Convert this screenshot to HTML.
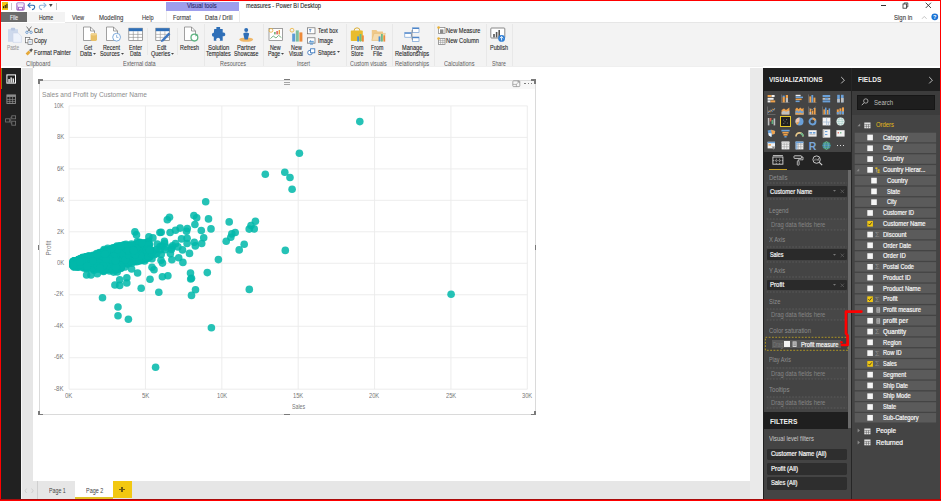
<!DOCTYPE html>
<html><head><meta charset="utf-8"><title>measures - Power BI Desktop</title>
<style>
html,body{margin:0;padding:0;}
body{width:941px;height:501px;overflow:hidden;background:#fff;font-family:"Liberation Sans",sans-serif;position:relative;}
#root{position:absolute;left:0;top:0;width:941px;height:501px;overflow:hidden;background:#fff;}
.r{position:absolute;display:block;}
.t{position:absolute;display:block;white-space:nowrap;transform-origin:0 50%;}
</style></head><body><div id="root">
<div class="r" style="left:0.00px;top:22.50px;width:941.00px;height:43.50px;background:#f3f3f3;"></div>
<div class="r" style="left:0.00px;top:66.00px;width:941.00px;height:2.00px;background:#ffffff;"></div>
<div class="r" style="left:21.00px;top:66.00px;width:742.00px;height:1.20px;background:#efefef;"></div>
<div class="r" style="left:0.00px;top:68.00px;width:941.00px;height:433.00px;background:#e9e9e9;"></div>
<div class="r" style="left:1.00px;top:68.00px;width:19.50px;height:431.00px;background:#212121;"></div>
<div class="r" style="left:20.50px;top:68.00px;width:1.00px;height:431.00px;background:#f6f6f6;"></div>
<div class="r" style="left:21.50px;top:68.00px;width:11.00px;height:413.00px;background:#e6e6e6;"></div>
<div class="r" style="left:32.50px;top:68.00px;width:717.50px;height:412.50px;background:#ffffff;"></div>
<div class="r" style="left:750.00px;top:68.00px;width:13.00px;height:431.00px;background:#eaeaea;"></div>
<div class="r" style="left:21.50px;top:481.00px;width:728.50px;height:18.00px;background:#e6e6e6;"></div>
<div class="r" style="left:763.00px;top:68.00px;width:177.00px;height:431.00px;background:#444444;"></div>
<div class="r" style="left:763.00px;top:68.00px;width:177.00px;height:22.50px;background:#1f1f1f;"></div>
<div class="r" style="left:763.00px;top:68.00px;width:1.00px;height:431.00px;background:#1f1f1f;"></div>
<div class="r" style="left:851.00px;top:68.00px;width:1.00px;height:431.00px;background:#262626;"></div>
<div class="r" style="left:1.50px;top:2.00px;width:6.40px;height:7.60px;background:#f2c811;"></div>
<svg class="r" style="left:1.50px;top:2.00px;" width="7" height="8" viewBox="0 0 7 8"><rect x="1" y="4.2" width="1.1" height="2" fill="#222"/><rect x="2.7" y="3" width="1.1" height="3.2" fill="#222"/><rect x="4.4" y="1.8" width="1.1" height="4.4" fill="#222"/></svg>
<div class="r" style="left:11.20px;top:2.50px;width:0.70px;height:7.00px;background:#c8c8c8;"></div>
<svg class="r" style="left:16.00px;top:1.50px;" width="9" height="9" viewBox="0 0 9 9"><rect x="1" y="1" width="7" height="7" rx="0.8" fill="#fff" stroke="#8e4bb8" stroke-width="1.1"/><rect x="2.6" y="5.2" width="3.8" height="2.6" fill="#fff" stroke="#8e4bb8" stroke-width="0.8"/><rect x="1.3" y="1.2" width="6.4" height="2.2" fill="#e9dcf3"/></svg>
<svg class="r" style="left:27.00px;top:1.50px;" width="9" height="9" viewBox="0 0 9 9"><path d="M1.2 3.2 L6 3.2 Q8 3.4 7.6 5.6 Q7.2 7.4 5 7.6" fill="none" stroke="#2e6db5" stroke-width="1.1"/><path d="M3.4 0.8 L1 3.2 L3.4 5.6" fill="none" stroke="#2e6db5" stroke-width="1.1"/></svg>
<svg class="r" style="left:37.50px;top:1.50px;" width="9" height="9" viewBox="0 0 9 9"><path d="M7.8 3.2 L3 3.2 Q1 3.4 1.4 5.6 Q1.8 7.4 4 7.6" fill="none" stroke="#8fb3dc" stroke-width="1.1"/><path d="M5.6 0.8 L8 3.2 L5.6 5.6" fill="none" stroke="#8fb3dc" stroke-width="1.1"/></svg>
<svg class="r" style="left:48.80px;top:4.40px;" width="4" height="4" viewBox="0 0 4 4"><path d="M0 0 L3.6 0 L1.8 3 Z" fill="#444"/></svg>
<div class="r" style="left:56.20px;top:2.50px;width:0.70px;height:7.00px;background:#c8c8c8;"></div>
<div class="r" style="left:166.20px;top:1.50px;width:72.60px;height:9.80px;background:#9e9eec;"></div>
<span class="t" style="left:187.20px;top:3.05px;font-size:6.3px;line-height:6.3px;color:#2a2a6a;-webkit-text-stroke:0.1px #2a2a6a;transform:scaleX(0.9283);">Visual tools</span>
<span class="t" style="left:245.50px;top:3.10px;font-size:6.8px;line-height:6.8px;color:#222222;-webkit-text-stroke:0.1px #222222;transform:scaleX(0.8304);">measures - Power BI Desktop</span>
<div class="r" style="left:880.70px;top:4.80px;width:5.80px;height:0.90px;background:#333;"></div>
<svg class="r" style="left:902.00px;top:1.80px;" width="7" height="7" viewBox="0 0 7 7"><rect x="1" y="2" width="3.6" height="4.2" fill="#fff" stroke="#333" stroke-width="0.8"/><path d="M2.2 2 V0.9 H5.8 V5 H4.6" fill="none" stroke="#333" stroke-width="0.8"/></svg>
<svg class="r" style="left:924.50px;top:2.00px;" width="7" height="7" viewBox="0 0 7 7"><path d="M0.7 0.7 L6 6 M6 0.7 L0.7 6" stroke="#333" stroke-width="0.9" fill="none"/></svg>
<div class="r" style="left:1.20px;top:11.70px;width:26.00px;height:10.60px;background:#6b6b6b;"></div>
<span class="t" style="left:9.90px;top:14.75px;font-size:6.3px;line-height:6.3px;color:#f4f4f4;-webkit-text-stroke:0.1px #f4f4f4;transform:scaleX(0.7881);">File</span>
<div class="r" style="left:27.40px;top:11.70px;width:37.40px;height:10.80px;background:#f3f3f3;"></div>
<span class="t" style="left:38.90px;top:14.75px;font-size:6.3px;line-height:6.3px;color:#2f2f2f;-webkit-text-stroke:0.1px #2f2f2f;transform:scaleX(0.8510);">Home</span>
<span class="t" style="left:72.00px;top:14.75px;font-size:6.3px;line-height:6.3px;color:#3b3b3b;-webkit-text-stroke:0.1px #3b3b3b;transform:scaleX(0.9010);">View</span>
<span class="t" style="left:98.70px;top:14.75px;font-size:6.3px;line-height:6.3px;color:#3b3b3b;-webkit-text-stroke:0.1px #3b3b3b;transform:scaleX(0.9505);">Modeling</span>
<span class="t" style="left:141.70px;top:14.75px;font-size:6.3px;line-height:6.3px;color:#3b3b3b;-webkit-text-stroke:0.1px #3b3b3b;transform:scaleX(0.8876);">Help</span>
<span class="t" style="left:173.00px;top:14.75px;font-size:6.3px;line-height:6.3px;color:#3b3b3b;-webkit-text-stroke:0.1px #3b3b3b;transform:scaleX(0.8872);">Format</span>
<span class="t" style="left:205.00px;top:14.75px;font-size:6.3px;line-height:6.3px;color:#3b3b3b;-webkit-text-stroke:0.1px #3b3b3b;transform:scaleX(0.9352);">Data / Drill</span>
<div class="r" style="left:166.20px;top:11.30px;width:0.60px;height:11.00px;background:#ececec;"></div>
<div class="r" style="left:238.60px;top:11.30px;width:0.60px;height:11.00px;background:#ececec;"></div>
<span class="t" style="left:894.00px;top:14.75px;font-size:6.3px;line-height:6.3px;color:#3b3b3b;-webkit-text-stroke:0.1px #3b3b3b;transform:scaleX(0.9500);">Sign in</span>
<svg class="r" style="left:920.50px;top:14.50px;" width="7" height="5" viewBox="0 0 7 5"><path d="M1 3.8 L3.3 1.4 L5.6 3.8" fill="none" stroke="#b8b8b8" stroke-width="0.8"/></svg>
<svg class="r" style="left:930.80px;top:13.40px;" width="8" height="8" viewBox="0 0 8 8"><circle cx="3.8" cy="3.8" r="3.4" fill="#1a73d6"/><text x="3.8" y="6" font-size="5.6" font-weight="bold" fill="#fff" text-anchor="middle" font-family="Liberation Sans">?</text></svg>
<div class="r" style="left:64.80px;top:22.40px;width:876.00px;height:0.60px;background:#e6e6e6;"></div>
<div class="r" style="left:75.70px;top:24.00px;width:0.60px;height:42.00px;background:#e8e8e8;"></div>
<div class="r" style="left:203.60px;top:24.00px;width:0.60px;height:42.00px;background:#e8e8e8;"></div>
<div class="r" style="left:262.50px;top:24.00px;width:0.60px;height:42.00px;background:#e8e8e8;"></div>
<div class="r" style="left:345.50px;top:24.00px;width:0.60px;height:42.00px;background:#e8e8e8;"></div>
<div class="r" style="left:391.70px;top:24.00px;width:0.60px;height:42.00px;background:#e8e8e8;"></div>
<div class="r" style="left:433.70px;top:24.00px;width:0.60px;height:42.00px;background:#e8e8e8;"></div>
<div class="r" style="left:486.20px;top:24.00px;width:0.60px;height:42.00px;background:#e8e8e8;"></div>
<div class="r" style="left:512.00px;top:24.00px;width:0.60px;height:42.00px;background:#e8e8e8;"></div>
<div class="r" style="left:147.40px;top:27.50px;width:0.60px;height:27.50px;background:#e8e8e8;"></div>
<div class="r" style="left:176.60px;top:27.50px;width:0.60px;height:27.50px;background:#e8e8e8;"></div>
<svg class="r" style="left:6.50px;top:26.50px;" width="16" height="16" viewBox="0 0 16 16"><rect x="1" y="2.2" width="10" height="12.6" fill="#cdd9ec"/><rect x="3.8" y="0.8" width="4.4" height="2.6" rx="1" fill="#b9c8e2"/><path d="M6 6 H11.2 L14.4 9.2 V15.4 H6 Z" fill="#eef3fb" stroke="#c9d5ea" stroke-width="0.6"/></svg>
<span class="t" style="left:6.70px;top:44.60px;font-size:6.4px;line-height:6.4px;color:#9c9c9c;-webkit-text-stroke:0.1px #9c9c9c;transform:scaleX(0.7333);">Paste</span>
<svg class="r" style="left:24.80px;top:26.40px;" width="8" height="8" viewBox="0 0 8 8"><path d="M1.6 0.6 L5.4 5.6 M6.4 0.6 L2.6 5.6" stroke="#5a5a5a" stroke-width="0.8" fill="none"/><circle cx="1.9" cy="6.3" r="1.2" fill="none" stroke="#5b8fcb" stroke-width="0.8"/><circle cx="6.1" cy="6.3" r="1.2" fill="none" stroke="#5b8fcb" stroke-width="0.8"/></svg>
<span class="t" style="left:34.20px;top:27.80px;font-size:6.4px;line-height:6.4px;color:#262626;-webkit-text-stroke:0.1px #262626;transform:scaleX(0.8836);">Cut</span>
<svg class="r" style="left:24.80px;top:36.80px;" width="8" height="8" viewBox="0 0 8 8"><rect x="0.6" y="0.6" width="4.2" height="5.2" fill="#fff" stroke="#6a6a6a" stroke-width="0.7"/><rect x="3" y="2.4" width="4.2" height="5.2" fill="#fff" stroke="#6a6a6a" stroke-width="0.7"/><path d="M4 4.3 H6.2 M4 5.8 H6.2" stroke="#6d9bd1" stroke-width="0.5"/></svg>
<span class="t" style="left:34.20px;top:38.30px;font-size:6.4px;line-height:6.4px;color:#262626;-webkit-text-stroke:0.1px #262626;transform:scaleX(0.8568);">Copy</span>
<svg class="r" style="left:25.00px;top:48.00px;" width="9" height="8" viewBox="0 0 9 8"><path d="M0.6 5.4 L3.6 2.4 L5.6 4.4 L2.6 7.4 Z" fill="#e5a838"/><path d="M4 2 L6.6 0.4 L7.8 1.6 L6.2 4.2 Z" fill="#555"/></svg>
<span class="t" style="left:34.20px;top:49.60px;font-size:6.4px;line-height:6.4px;color:#262626;-webkit-text-stroke:0.1px #262626;transform:scaleX(0.8742);">Format Painter</span>
<span class="t" style="left:25.50px;top:60.75px;font-size:6.3px;line-height:6.3px;color:#5e5e5e;transform:scaleX(0.9086);">Clipboard</span>
<svg class="r" style="left:82.00px;top:0.00px;" width="18" height="44" viewBox="0 0 18 44"><path d="M1.5 27.0 H8.5 L12.5 31.0 V40.5 H1.5 Z" fill="#fff" stroke="#7a7a7a" stroke-width="0.7"/><path d="M8.5 27.0 V31.0 H12.5" fill="none" stroke="#7a7a7a" stroke-width="0.7"/><rect x="8.6" y="33.6" width="6.4" height="7.4" rx="1.4" fill="#e8c067"/><ellipse cx="11.8" cy="34.2" rx="3.2" ry="1.2" fill="#f0d28f"/></svg>
<span class="t" style="left:84.20px;top:44.60px;font-size:6.4px;line-height:6.4px;color:#262626;-webkit-text-stroke:0.1px #262626;transform:scaleX(0.7950);">Get</span>
<span class="t" style="left:80.40px;top:50.80px;font-size:6.4px;line-height:6.4px;color:#262626;-webkit-text-stroke:0.1px #262626;transform:scaleX(0.8803);">Data</span>
<svg class="r" style="left:93.30px;top:52.60px;" width="4" height="3" viewBox="0 0 4 3"><path d="M0 0 L3 0 L1.5 1.8 Z" fill="#444"/></svg>
<svg class="r" style="left:104.50px;top:0.00px;" width="18" height="44" viewBox="0 0 18 44"><path d="M1.5 27.0 H8.5 L12.5 31.0 V40.5 H1.5 Z" fill="#fff" stroke="#7a7a7a" stroke-width="0.7"/><path d="M8.5 27.0 V31.0 H12.5" fill="none" stroke="#7a7a7a" stroke-width="0.7"/><circle cx="11.6" cy="37.2" r="3.9" fill="#fff" stroke="#6fa0d6" stroke-width="0.9"/><path d="M11.6 34.9 V37.4 H13.4" fill="none" stroke="#6fa0d6" stroke-width="0.7"/></svg>
<span class="t" style="left:103.00px;top:44.60px;font-size:6.4px;line-height:6.4px;color:#262626;-webkit-text-stroke:0.1px #262626;transform:scaleX(0.8384);">Recent</span>
<span class="t" style="left:100.00px;top:50.80px;font-size:6.4px;line-height:6.4px;color:#262626;-webkit-text-stroke:0.1px #262626;transform:scaleX(0.8434);">Sources</span>
<svg class="r" style="left:120.70px;top:52.60px;" width="4" height="3" viewBox="0 0 4 3"><path d="M0 0 L3 0 L1.5 1.8 Z" fill="#444"/></svg>
<svg class="r" style="left:127.50px;top:26.50px;" width="16" height="16" viewBox="0 0 16 16"><rect x="0.8" y="1.2" width="13.6" height="12.4" fill="#fff" stroke="#7a7a7a" stroke-width="0.7"/><rect x="0.8" y="1.2" width="13.6" height="3" fill="#2f6fb7"/><path d="M0.8 7.4 H14.4 M0.8 10.4 H14.4 M5.3 4.2 V13.6 M9.9 4.2 V13.6" stroke="#8a8a8a" stroke-width="0.6"/></svg>
<span class="t" style="left:128.60px;top:44.60px;font-size:6.4px;line-height:6.4px;color:#262626;-webkit-text-stroke:0.1px #262626;transform:scaleX(0.8499);">Enter</span>
<span class="t" style="left:129.60px;top:50.80px;font-size:6.4px;line-height:6.4px;color:#262626;-webkit-text-stroke:0.1px #262626;transform:scaleX(0.7989);">Data</span>
<svg class="r" style="left:154.50px;top:26.50px;" width="17" height="16" viewBox="0 0 17 16"><rect x="0.8" y="1.2" width="13.6" height="12.4" fill="#fff" stroke="#7a7a7a" stroke-width="0.7"/><rect x="0.8" y="1.2" width="13.6" height="3" fill="#2f6fb7"/><path d="M0.8 7.4 H14.4 M0.8 10.4 H14.4 M5.3 4.2 V13.6 M9.9 4.2 V13.6" stroke="#9a9a9a" stroke-width="0.6"/><path d="M6.4 13 L13.6 5.4 L15.4 7.2 L8.2 14.4 L5.8 15 Z" fill="#3e78c2"/></svg>
<span class="t" style="left:157.00px;top:44.60px;font-size:6.4px;line-height:6.4px;color:#262626;-webkit-text-stroke:0.1px #262626;transform:scaleX(0.8524);">Edit</span>
<span class="t" style="left:150.60px;top:50.80px;font-size:6.4px;line-height:6.4px;color:#262626;-webkit-text-stroke:0.1px #262626;transform:scaleX(0.8568);">Queries</span>
<svg class="r" style="left:170.60px;top:52.60px;" width="4" height="3" viewBox="0 0 4 3"><path d="M0 0 L3 0 L1.5 1.8 Z" fill="#444"/></svg>
<svg class="r" style="left:182.50px;top:0.00px;" width="18" height="44" viewBox="0 0 18 44"><path d="M1.5 27.0 H8.5 L12.5 31.0 V40.5 H1.5 Z" fill="#fff" stroke="#7a7a7a" stroke-width="0.7"/><path d="M8.5 27.0 V31.0 H12.5" fill="none" stroke="#7a7a7a" stroke-width="0.7"/><circle cx="11.4" cy="37.6" r="3.4" fill="#fff" stroke="#5fb382" stroke-width="1.3"/><path d="M12.6 33.4 L15.2 35 L12.4 36.4 Z" fill="#5fb382"/></svg>
<span class="t" style="left:180.00px;top:44.60px;font-size:6.4px;line-height:6.4px;color:#262626;-webkit-text-stroke:0.1px #262626;transform:scaleX(0.8479);">Refresh</span>
<span class="t" style="left:123.00px;top:60.75px;font-size:6.3px;line-height:6.3px;color:#5e5e5e;transform:scaleX(0.8782);">External data</span>
<svg class="r" style="left:211.00px;top:26.50px;" width="16" height="16" viewBox="0 0 16 16"><path transform="translate(-1.3,-0.6) scale(1.14)" d="M4 2.2 H6 A1.7 1.7 0 1 1 9 2.2 H11.4 V5.4 A1.7 1.7 0 1 1 11.4 8.6 V12.6 H8.8 A1.7 1.7 0 1 0 6 12.6 H3.6 V9 A1.7 1.7 0 1 1 3.6 5.6 Z" fill="#2f6fb7"/></svg>
<span class="t" style="left:208.00px;top:44.60px;font-size:6.4px;line-height:6.4px;color:#262626;-webkit-text-stroke:0.1px #262626;transform:scaleX(0.9253);">Solution</span>
<span class="t" style="left:206.30px;top:50.80px;font-size:6.4px;line-height:6.4px;color:#262626;-webkit-text-stroke:0.1px #262626;transform:scaleX(0.8468);">Templates</span>
<svg class="r" style="left:237.50px;top:26.50px;" width="17" height="16" viewBox="0 0 17 16"><ellipse cx="8.2" cy="12.6" rx="7" ry="2.2" fill="#f0b869"/><circle cx="8.2" cy="3" r="2" fill="#2f6fb7"/><path d="M5.2 6.4 Q8.2 4.6 11.2 6.4 L9.8 12.4 H6.6 Z" fill="#2f6fb7"/></svg>
<span class="t" style="left:236.70px;top:44.60px;font-size:6.4px;line-height:6.4px;color:#262626;-webkit-text-stroke:0.1px #262626;transform:scaleX(0.8958);">Partner</span>
<span class="t" style="left:234.20px;top:50.80px;font-size:6.4px;line-height:6.4px;color:#262626;-webkit-text-stroke:0.1px #262626;transform:scaleX(0.8297);">Showcase</span>
<span class="t" style="left:220.00px;top:60.75px;font-size:6.3px;line-height:6.3px;color:#5e5e5e;transform:scaleX(0.8635);">Resources</span>
<svg class="r" style="left:267.50px;top:26.50px;" width="16" height="16" viewBox="0 0 16 16"><rect x="1" y="1.6" width="13.6" height="12" fill="#fff" stroke="#7a7a7a" stroke-width="0.7"/><path d="M2.4 11.6 L5.2 9 L8 11 L10.6 8.4 L13.4 10.6" fill="none" stroke="#5aa469" stroke-width="0.8"/><rect x="8.4" y="4" width="1.4" height="3.4" fill="#d9534f"/><rect x="10.6" y="3" width="1.4" height="4.4" fill="#e8a33a"/><rect x="6.2" y="5" width="1.4" height="2.4" fill="#5aa469"/><circle cx="3" cy="3.4" r="1.9" fill="none" stroke="#e8b13a" stroke-width="0.8"/></svg>
<span class="t" style="left:270.00px;top:44.60px;font-size:6.4px;line-height:6.4px;color:#262626;-webkit-text-stroke:0.1px #262626;transform:scaleX(0.8357);">New</span>
<span class="t" style="left:267.50px;top:50.80px;font-size:6.4px;line-height:6.4px;color:#262626;-webkit-text-stroke:0.1px #262626;transform:scaleX(0.8230);">Page</span>
<svg class="r" style="left:280.60px;top:52.60px;" width="4" height="3" viewBox="0 0 4 3"><path d="M0 0 L3 0 L1.5 1.8 Z" fill="#444"/></svg>
<svg class="r" style="left:288.50px;top:26.50px;" width="16" height="16" viewBox="0 0 16 16"><rect x="3.2" y="6.6" width="3" height="8" fill="#5b9bd5"/><rect x="6.8" y="3.4" width="3" height="11.2" fill="#7fbf9e"/><rect x="10.4" y="5.4" width="3" height="9.2" fill="#ed8b3a"/><circle cx="3" cy="3.2" r="1.9" fill="none" stroke="#e8b13a" stroke-width="0.8"/></svg>
<span class="t" style="left:290.70px;top:44.60px;font-size:6.4px;line-height:6.4px;color:#262626;-webkit-text-stroke:0.1px #262626;transform:scaleX(0.8436);">New</span>
<span class="t" style="left:289.20px;top:50.80px;font-size:6.4px;line-height:6.4px;color:#262626;-webkit-text-stroke:0.1px #262626;transform:scaleX(0.8085);">Visual</span>
<svg class="r" style="left:307.00px;top:26.60px;" width="9" height="8" viewBox="0 0 9 8"><rect x="0.6" y="0.8" width="7.4" height="6" fill="#fff" stroke="#6a6a6a" stroke-width="0.7"/><path d="M2 2.6 H4.4 M3.2 2.6 V5.2" stroke="#2f6fb7" stroke-width="0.7"/></svg>
<span class="t" style="left:317.50px;top:27.80px;font-size:6.4px;line-height:6.4px;color:#262626;-webkit-text-stroke:0.1px #262626;transform:scaleX(0.8392);">Text box</span>
<svg class="r" style="left:307.00px;top:37.00px;" width="9" height="8" viewBox="0 0 9 8"><rect x="0.6" y="0.8" width="7.4" height="5.4" fill="#fff" stroke="#6a6a6a" stroke-width="0.7"/><path d="M1.4 5.4 L3.6 3 L5 4.4 L6 3.6 L7.4 5.4 Z" fill="#5b9bd5"/><rect x="3" y="6.4" width="3" height="1.2" fill="#5b9bd5"/></svg>
<span class="t" style="left:317.50px;top:38.30px;font-size:6.4px;line-height:6.4px;color:#262626;-webkit-text-stroke:0.1px #262626;transform:scaleX(0.8434);">Image</span>
<svg class="r" style="left:307.00px;top:48.00px;" width="9" height="8" viewBox="0 0 9 8"><circle cx="3" cy="4.6" r="2.3" fill="#fff" stroke="#2f6fb7" stroke-width="0.8"/><rect x="3.6" y="0.8" width="4.2" height="4" fill="#fff" stroke="#2f6fb7" stroke-width="0.8"/></svg>
<span class="t" style="left:317.50px;top:49.60px;font-size:6.4px;line-height:6.4px;color:#262626;-webkit-text-stroke:0.1px #262626;transform:scaleX(0.8063);">Shapes</span>
<svg class="r" style="left:336.60px;top:51.40px;" width="4" height="3" viewBox="0 0 4 3"><path d="M0 0 L3 0 L1.5 1.8 Z" fill="#444"/></svg>
<span class="t" style="left:297.00px;top:60.75px;font-size:6.3px;line-height:6.3px;color:#5e5e5e;transform:scaleX(0.8251);">Insert</span>
<svg class="r" style="left:350.00px;top:26.50px;" width="16" height="16" viewBox="0 0 16 16"><path d="M4 4 Q4 0.8 7 0.8 Q10 0.8 10 4" fill="none" stroke="#d8a722" stroke-width="0.9"/><rect x="0.8" y="3.6" width="12" height="10.4" rx="0.8" fill="#e9bc2d"/><rect x="7.2" y="9.4" width="1.8" height="5.2" fill="#4a90d9"/><rect x="9.6" y="7" width="1.8" height="7.6" fill="#6dbb8a"/><rect x="12" y="8.4" width="1.8" height="6.2" fill="#ed8b3a"/></svg>
<span class="t" style="left:350.70px;top:44.60px;font-size:6.4px;line-height:6.4px;color:#262626;-webkit-text-stroke:0.1px #262626;transform:scaleX(0.8238);">From</span>
<span class="t" style="left:350.70px;top:50.80px;font-size:6.4px;line-height:6.4px;color:#262626;-webkit-text-stroke:0.1px #262626;transform:scaleX(0.8172);">Store</span>
<svg class="r" style="left:370.80px;top:26.50px;" width="16" height="16" viewBox="0 0 16 16"><path d="M0.8 3 H5.4 L6.6 4.4 H12 V13.4 H0.8 Z" fill="#f0c98a"/><path d="M0.8 13.4 L3 6.4 H14.4 L12 13.4 Z" fill="#f6dcae" stroke="#e3b96e" stroke-width="0.5"/><rect x="7.6" y="9.4" width="1.8" height="5.2" fill="#4a90d9"/><rect x="10" y="7" width="1.8" height="7.6" fill="#6dbb8a"/><rect x="12.4" y="8.4" width="1.8" height="6.2" fill="#ed8b3a"/></svg>
<span class="t" style="left:371.20px;top:44.60px;font-size:6.4px;line-height:6.4px;color:#262626;-webkit-text-stroke:0.1px #262626;transform:scaleX(0.8238);">From</span>
<span class="t" style="left:372.70px;top:50.80px;font-size:6.4px;line-height:6.4px;color:#262626;-webkit-text-stroke:0.1px #262626;transform:scaleX(0.9019);">File</span>
<span class="t" style="left:349.50px;top:60.75px;font-size:6.3px;line-height:6.3px;color:#5e5e5e;transform:scaleX(0.8593);">Custom visuals</span>
<svg class="r" style="left:404.00px;top:26.50px;" width="17" height="16" viewBox="0 0 17 16"><rect x="8.6" y="0.8" width="6.4" height="4.6" fill="#fff" stroke="#5b8fcf" stroke-width="0.6"/><rect x="8.6" y="0.8" width="6.4" height="1.2" fill="#4f86c9"/><rect x="0.8" y="5.6" width="6.4" height="4.6" fill="#fff" stroke="#5b8fcf" stroke-width="0.6"/><rect x="0.8" y="5.6" width="6.4" height="1.2" fill="#4f86c9"/><rect x="8.6" y="10" width="6.4" height="4.6" fill="#fff" stroke="#5b8fcf" stroke-width="0.6"/><rect x="8.6" y="10" width="6.4" height="1.2" fill="#4f86c9"/><path d="M7.2 8 H8 V3.2 H8.6 M8 8 V12.4 H8.6" fill="none" stroke="#6a6a6a" stroke-width="0.6"/></svg>
<span class="t" style="left:401.70px;top:44.60px;font-size:6.4px;line-height:6.4px;color:#262626;-webkit-text-stroke:0.1px #262626;transform:scaleX(0.8778);">Manage</span>
<span class="t" style="left:395.00px;top:50.80px;font-size:6.4px;line-height:6.4px;color:#262626;-webkit-text-stroke:0.1px #262626;transform:scaleX(0.8902);">Relationships</span>
<span class="t" style="left:395.00px;top:60.75px;font-size:6.3px;line-height:6.3px;color:#5e5e5e;transform:scaleX(0.9043);">Relationships</span>
<svg class="r" style="left:436.80px;top:26.40px;" width="9" height="8" viewBox="0 0 9 8"><rect x="1.4" y="1.6" width="6.6" height="5.8" fill="#fff" stroke="#7a7a7a" stroke-width="0.7"/><rect x="3" y="3.4" width="3.4" height="4" fill="#8a8a8a"/><circle cx="1.6" cy="1.6" r="1.3" fill="#e8b13a"/></svg>
<span class="t" style="left:446.20px;top:27.80px;font-size:6.4px;line-height:6.4px;color:#262626;-webkit-text-stroke:0.1px #262626;transform:scaleX(0.8739);">New Measure</span>
<svg class="r" style="left:436.80px;top:36.80px;" width="9" height="8" viewBox="0 0 9 8"><rect x="1.4" y="1.6" width="6.6" height="5.8" fill="#fff" stroke="#7a7a7a" stroke-width="0.7"/><path d="M1.4 3.6 H8 M1.4 5.4 H8 M3.6 1.6 V7.4 M5.8 1.6 V7.4" stroke="#8a8a8a" stroke-width="0.5"/><circle cx="1.6" cy="1.6" r="1.3" fill="#e8b13a"/></svg>
<span class="t" style="left:446.20px;top:38.30px;font-size:6.4px;line-height:6.4px;color:#262626;-webkit-text-stroke:0.1px #262626;transform:scaleX(0.9008);">New Column</span>
<span class="t" style="left:443.70px;top:60.75px;font-size:6.3px;line-height:6.3px;color:#5e5e5e;transform:scaleX(0.8888);">Calculations</span>
<svg class="r" style="left:490.20px;top:26.50px;" width="17" height="16" viewBox="0 0 17 16"><rect x="0.8" y="1" width="14" height="10" rx="0.8" fill="#fff" stroke="#6a6a6a" stroke-width="0.8"/><rect x="3.2" y="7" width="1.6" height="3.4" fill="#555"/><rect x="5.8" y="5" width="1.6" height="5.4" fill="#555"/><rect x="8.4" y="3" width="1.6" height="7.4" fill="#555"/><circle cx="11.6" cy="11.4" r="3.4" fill="#2f7fd6"/><path d="M11.6 13.4 V9.6 M9.9 11.2 L11.6 9.5 L13.3 11.2" fill="none" stroke="#fff" stroke-width="0.9"/></svg>
<span class="t" style="left:489.50px;top:44.60px;font-size:6.4px;line-height:6.4px;color:#262626;-webkit-text-stroke:0.1px #262626;transform:scaleX(0.8576);">Publish</span>
<span class="t" style="left:491.70px;top:60.75px;font-size:6.3px;line-height:6.3px;color:#5e5e5e;transform:scaleX(0.8209);">Share</span>
<svg class="r" style="left:5.60px;top:73.50px;" width="11" height="11" viewBox="0 0 11 11"><rect x="0.9" y="0.9" width="8.6" height="8.2" fill="none" stroke="#ffffff" stroke-width="1"/><rect x="2.4" y="5" width="1.3" height="3.6" fill="#fff"/><rect x="4.5" y="3.4" width="1.3" height="5.2" fill="#fff"/><rect x="6.6" y="4.4" width="1.3" height="4.2" fill="#fff"/></svg>
<div class="r" style="left:1.00px;top:68.00px;width:1.00px;height:21.00px;background:#8a7a14;"></div>
<svg class="r" style="left:5.60px;top:94.00px;" width="11" height="11" viewBox="0 0 11 11"><rect x="0.9" y="0.9" width="8.6" height="8.6" fill="none" stroke="#8c8c8c" stroke-width="0.9"/><rect x="0.9" y="0.9" width="8.6" height="2" fill="#8c8c8c"/><path d="M0.9 5.6 H9.5 M0.9 7.6 H9.5 M3.8 2.9 V9.5 M6.6 2.9 V9.5" stroke="#8c8c8c" stroke-width="0.7"/></svg>
<svg class="r" style="left:5.20px;top:114.50px;" width="12" height="11" viewBox="0 0 12 11"><rect x="0.6" y="3.8" width="4.2" height="3.2" fill="none" stroke="#777777" stroke-width="0.8"/><rect x="6.8" y="0.8" width="3.8" height="3" fill="none" stroke="#777777" stroke-width="0.8"/><rect x="6.8" y="6.2" width="3.8" height="4" fill="none" stroke="#777777" stroke-width="0.8"/><path d="M4.8 5.2 H5.8 V2.2 H6.8 M5.8 5.2 V8.2 H6.8" fill="none" stroke="#777777" stroke-width="0.6"/></svg>
<div class="r" style="left:38.50px;top:79.50px;width:496.80px;height:9.00px;background:#f7f7f7;"></div>
<div class="r" style="left:38.50px;top:79.50px;width:496.80px;height:0.90px;background:#dadada;"></div>
<div class="r" style="left:38.50px;top:414.00px;width:496.80px;height:0.90px;background:#dadada;"></div>
<div class="r" style="left:38.50px;top:79.50px;width:0.90px;height:335.00px;background:#dadada;"></div>
<div class="r" style="left:534.80px;top:79.50px;width:0.90px;height:335.00px;background:#dadada;"></div>
<div class="r" style="left:37.80px;top:78.80px;width:4.80px;height:1.80px;background:#7a7a7a;"></div>
<div class="r" style="left:37.80px;top:78.80px;width:1.80px;height:4.80px;background:#7a7a7a;"></div>
<div class="r" style="left:531.40px;top:78.80px;width:4.80px;height:1.80px;background:#7a7a7a;"></div>
<div class="r" style="left:534.40px;top:78.80px;width:1.80px;height:4.80px;background:#7a7a7a;"></div>
<div class="r" style="left:37.80px;top:413.50px;width:4.80px;height:1.80px;background:#7a7a7a;"></div>
<div class="r" style="left:37.80px;top:410.50px;width:1.80px;height:4.80px;background:#7a7a7a;"></div>
<div class="r" style="left:531.40px;top:413.50px;width:4.80px;height:1.80px;background:#7a7a7a;"></div>
<div class="r" style="left:534.40px;top:410.50px;width:1.80px;height:4.80px;background:#7a7a7a;"></div>
<div class="r" style="left:37.90px;top:244.60px;width:1.50px;height:5.40px;background:#7a7a7a;"></div>
<div class="r" style="left:534.60px;top:244.60px;width:1.50px;height:5.40px;background:#7a7a7a;"></div>
<div class="r" style="left:284.30px;top:413.90px;width:5.40px;height:1.40px;background:#7a7a7a;"></div>
<div class="r" style="left:284.30px;top:79.00px;width:5.40px;height:1.40px;background:#7a7a7a;"></div>
<div class="r" style="left:283.60px;top:82.00px;width:6.80px;height:0.60px;background:#a5a5a5;"></div>
<div class="r" style="left:283.60px;top:83.60px;width:6.80px;height:0.60px;background:#a5a5a5;"></div>
<svg class="r" style="left:511.60px;top:79.80px;" width="9" height="8" viewBox="0 0 9 8"><rect x="0.8" y="0.8" width="7" height="5.8" rx="0.8" fill="none" stroke="#8a8a8a" stroke-width="0.7"/><path d="M0.8 4.4 H4.4 V6.6 M4.2 4.4 L7 1.6 M5.4 1.4 H7.2 V3.2" fill="none" stroke="#8a8a8a" stroke-width="0.6"/></svg>
<div class="r" style="left:524.40px;top:83.00px;width:1.30px;height:1.30px;background:#7d7d7d;"></div>
<div class="r" style="left:527.50px;top:83.00px;width:1.30px;height:1.30px;background:#7d7d7d;"></div>
<div class="r" style="left:530.60px;top:83.00px;width:1.30px;height:1.30px;background:#7d7d7d;"></div>
<span class="t" style="left:42.00px;top:91.20px;font-size:7.2px;line-height:7.2px;color:#8c8c8c;transform:scaleX(0.9143);">Sales and Profit by Customer Name</span>
<svg class="r" style="left:0.00px;top:0.00px;" width="760" height="481" viewBox="0 0 760 481"><path d="M69.10 105.90 V389.20" stroke="#ebebeb" stroke-width="0.9"/><path d="M145.47 105.90 V389.20" stroke="#ebebeb" stroke-width="0.9"/><path d="M221.83 105.90 V389.20" stroke="#ebebeb" stroke-width="0.9"/><path d="M298.20 105.90 V389.20" stroke="#ebebeb" stroke-width="0.9"/><path d="M374.57 105.90 V389.20" stroke="#ebebeb" stroke-width="0.9"/><path d="M450.93 105.90 V389.20" stroke="#ebebeb" stroke-width="0.9"/><path d="M527.30 105.90 V389.20" stroke="#ebebeb" stroke-width="0.9"/><path d="M69.10 105.90 H527.30" stroke="#ebebeb" stroke-width="0.9"/><path d="M69.10 137.38 H527.30" stroke="#ebebeb" stroke-width="0.9"/><path d="M69.10 168.86 H527.30" stroke="#ebebeb" stroke-width="0.9"/><path d="M69.10 200.33 H527.30" stroke="#ebebeb" stroke-width="0.9"/><path d="M69.10 231.81 H527.30" stroke="#ebebeb" stroke-width="0.9"/><path d="M69.10 263.29 H527.30" stroke="#ebebeb" stroke-width="0.9"/><path d="M69.10 294.77 H527.30" stroke="#ebebeb" stroke-width="0.9"/><path d="M69.10 326.24 H527.30" stroke="#ebebeb" stroke-width="0.9"/><path d="M69.10 357.72 H527.30" stroke="#ebebeb" stroke-width="0.9"/><path d="M69.10 389.20 H527.30" stroke="#ebebeb" stroke-width="0.9"/><g fill="#01b8aa" fill-opacity="0.86"><circle cx="90.9" cy="257.3" r="3.8"/><circle cx="75.5" cy="263.8" r="3.8"/><circle cx="74.8" cy="263.7" r="3.8"/><circle cx="99.2" cy="253.6" r="3.8"/><circle cx="98.5" cy="266.3" r="3.8"/><circle cx="84.0" cy="264.4" r="3.8"/><circle cx="111.1" cy="256.7" r="3.8"/><circle cx="74.3" cy="265.8" r="3.8"/><circle cx="79.2" cy="260.2" r="3.8"/><circle cx="132.8" cy="247.4" r="3.8"/><circle cx="116.5" cy="255.3" r="3.8"/><circle cx="75.0" cy="261.0" r="3.8"/><circle cx="120.2" cy="255.9" r="3.8"/><circle cx="111.8" cy="258.0" r="3.8"/><circle cx="130.7" cy="257.8" r="3.8"/><circle cx="110.8" cy="260.1" r="3.8"/><circle cx="124.7" cy="250.1" r="3.8"/><circle cx="77.8" cy="262.8" r="3.8"/><circle cx="79.6" cy="263.1" r="3.8"/><circle cx="119.1" cy="263.8" r="3.8"/><circle cx="138.5" cy="248.9" r="3.8"/><circle cx="112.6" cy="260.8" r="3.8"/><circle cx="135.1" cy="261.4" r="3.8"/><circle cx="118.7" cy="247.8" r="3.8"/><circle cx="117.2" cy="271.9" r="3.8"/><circle cx="88.1" cy="260.9" r="3.8"/><circle cx="73.5" cy="263.6" r="3.8"/><circle cx="77.7" cy="260.2" r="3.8"/><circle cx="78.4" cy="261.4" r="3.8"/><circle cx="138.1" cy="244.7" r="3.8"/><circle cx="108.7" cy="269.4" r="3.8"/><circle cx="137.4" cy="248.5" r="3.8"/><circle cx="93.5" cy="268.3" r="3.8"/><circle cx="79.6" cy="260.6" r="3.8"/><circle cx="84.7" cy="262.5" r="3.8"/><circle cx="86.6" cy="256.9" r="3.8"/><circle cx="94.3" cy="262.8" r="3.8"/><circle cx="121.1" cy="257.7" r="3.8"/><circle cx="119.8" cy="245.7" r="3.8"/><circle cx="129.4" cy="261.6" r="3.8"/><circle cx="96.0" cy="259.7" r="3.8"/><circle cx="116.1" cy="248.3" r="3.8"/><circle cx="83.1" cy="259.6" r="3.8"/><circle cx="74.6" cy="260.8" r="3.8"/><circle cx="76.9" cy="262.5" r="3.8"/><circle cx="138.4" cy="254.4" r="3.8"/><circle cx="85.9" cy="260.8" r="3.8"/><circle cx="78.0" cy="266.5" r="3.8"/><circle cx="101.8" cy="260.2" r="3.8"/><circle cx="76.9" cy="262.4" r="3.8"/><circle cx="134.0" cy="246.8" r="3.8"/><circle cx="146.0" cy="251.1" r="3.8"/><circle cx="108.2" cy="249.8" r="3.8"/><circle cx="148.7" cy="255.9" r="3.8"/><circle cx="86.5" cy="260.9" r="3.8"/><circle cx="128.6" cy="255.0" r="3.8"/><circle cx="91.3" cy="257.6" r="3.8"/><circle cx="149.4" cy="256.7" r="3.8"/><circle cx="133.0" cy="258.1" r="3.8"/><circle cx="106.0" cy="257.0" r="3.8"/><circle cx="73.6" cy="262.6" r="3.8"/><circle cx="121.3" cy="267.8" r="3.8"/><circle cx="144.6" cy="260.9" r="3.8"/><circle cx="93.9" cy="257.5" r="3.8"/><circle cx="82.3" cy="260.2" r="3.8"/><circle cx="140.9" cy="257.8" r="3.8"/><circle cx="117.7" cy="264.8" r="3.8"/><circle cx="118.4" cy="267.2" r="3.8"/><circle cx="126.6" cy="254.4" r="3.8"/><circle cx="130.2" cy="250.1" r="3.8"/><circle cx="148.0" cy="248.5" r="3.8"/><circle cx="145.5" cy="254.5" r="3.8"/><circle cx="78.2" cy="260.3" r="3.8"/><circle cx="131.9" cy="245.5" r="3.8"/><circle cx="148.9" cy="252.5" r="3.8"/><circle cx="108.6" cy="251.8" r="3.8"/><circle cx="148.0" cy="252.6" r="3.8"/><circle cx="144.2" cy="249.7" r="3.8"/><circle cx="133.8" cy="247.8" r="3.8"/><circle cx="88.7" cy="259.0" r="3.8"/><circle cx="86.4" cy="261.5" r="3.8"/><circle cx="141.9" cy="249.0" r="3.8"/><circle cx="111.6" cy="268.1" r="3.8"/><circle cx="142.7" cy="251.4" r="3.8"/><circle cx="106.5" cy="250.2" r="3.8"/><circle cx="81.5" cy="258.6" r="3.8"/><circle cx="80.8" cy="262.8" r="3.8"/><circle cx="109.3" cy="255.7" r="3.8"/><circle cx="109.2" cy="265.5" r="3.8"/><circle cx="109.6" cy="254.0" r="3.8"/><circle cx="128.6" cy="254.5" r="3.8"/><circle cx="127.5" cy="262.8" r="3.8"/><circle cx="114.1" cy="258.8" r="3.8"/><circle cx="121.3" cy="256.2" r="3.8"/><circle cx="102.8" cy="268.5" r="3.8"/><circle cx="138.6" cy="260.3" r="3.8"/><circle cx="109.6" cy="271.0" r="3.8"/><circle cx="78.8" cy="260.4" r="3.8"/><circle cx="75.5" cy="262.0" r="3.8"/><circle cx="119.2" cy="265.8" r="3.8"/><circle cx="79.8" cy="264.9" r="3.8"/><circle cx="79.1" cy="266.9" r="3.8"/><circle cx="83.8" cy="267.2" r="3.8"/><circle cx="103.5" cy="271.4" r="3.8"/><circle cx="80.2" cy="262.6" r="3.8"/><circle cx="92.0" cy="257.6" r="3.8"/><circle cx="124.0" cy="245.8" r="3.8"/><circle cx="99.8" cy="252.6" r="3.8"/><circle cx="115.1" cy="258.8" r="3.8"/><circle cx="149.4" cy="255.4" r="3.8"/><circle cx="77.1" cy="261.8" r="3.8"/><circle cx="129.3" cy="249.7" r="3.8"/><circle cx="98.3" cy="269.2" r="3.8"/><circle cx="86.3" cy="258.0" r="3.8"/><circle cx="110.5" cy="263.6" r="3.8"/><circle cx="74.8" cy="264.8" r="3.8"/><circle cx="75.5" cy="266.3" r="3.8"/><circle cx="131.4" cy="244.1" r="3.8"/><circle cx="75.2" cy="265.9" r="3.8"/><circle cx="92.0" cy="262.8" r="3.8"/><circle cx="87.0" cy="258.2" r="3.8"/><circle cx="85.0" cy="258.5" r="3.8"/><circle cx="74.5" cy="262.0" r="3.8"/><circle cx="89.6" cy="265.3" r="3.8"/><circle cx="104.6" cy="253.9" r="3.8"/><circle cx="73.3" cy="262.5" r="3.8"/><circle cx="125.0" cy="256.1" r="3.8"/><circle cx="102.5" cy="268.3" r="3.8"/><circle cx="133.1" cy="252.2" r="3.8"/><circle cx="134.6" cy="251.1" r="3.8"/><circle cx="120.8" cy="268.4" r="3.8"/><circle cx="134.3" cy="257.1" r="3.8"/><circle cx="97.0" cy="258.7" r="3.8"/><circle cx="78.4" cy="260.1" r="3.8"/><circle cx="86.1" cy="258.8" r="3.8"/><circle cx="135.2" cy="260.0" r="3.8"/><circle cx="87.9" cy="259.2" r="3.8"/><circle cx="101.3" cy="254.5" r="3.8"/><circle cx="86.7" cy="268.7" r="3.8"/><circle cx="108.5" cy="253.4" r="3.8"/><circle cx="89.9" cy="260.2" r="3.8"/><circle cx="95.2" cy="261.0" r="3.8"/><circle cx="82.6" cy="262.9" r="3.8"/><circle cx="86.7" cy="257.8" r="3.8"/><circle cx="74.2" cy="261.1" r="3.8"/><circle cx="84.6" cy="263.5" r="3.8"/><circle cx="126.6" cy="257.9" r="3.8"/><circle cx="138.9" cy="250.2" r="3.8"/><circle cx="149.4" cy="244.2" r="3.8"/><circle cx="116.9" cy="246.0" r="3.8"/><circle cx="140.1" cy="254.2" r="3.8"/><circle cx="132.4" cy="246.6" r="3.8"/><circle cx="104.9" cy="268.0" r="3.8"/><circle cx="133.8" cy="255.2" r="3.8"/><circle cx="120.4" cy="261.9" r="3.8"/><circle cx="73.8" cy="261.8" r="3.8"/><circle cx="77.1" cy="265.8" r="3.8"/><circle cx="115.5" cy="261.3" r="3.8"/><circle cx="103.7" cy="250.9" r="3.8"/><circle cx="126.4" cy="254.9" r="3.8"/><circle cx="118.3" cy="248.0" r="3.8"/><circle cx="85.9" cy="257.9" r="3.8"/><circle cx="124.6" cy="249.3" r="3.8"/><circle cx="148.4" cy="250.0" r="3.8"/><circle cx="102.9" cy="263.7" r="3.8"/><circle cx="114.5" cy="261.9" r="3.8"/><circle cx="79.4" cy="261.3" r="3.8"/><circle cx="89.5" cy="262.9" r="3.8"/><circle cx="74.9" cy="262.3" r="3.8"/><circle cx="121.2" cy="261.3" r="3.8"/><circle cx="105.9" cy="259.2" r="3.8"/><circle cx="77.8" cy="266.2" r="3.8"/><circle cx="148.7" cy="257.1" r="3.8"/><circle cx="101.2" cy="267.6" r="3.8"/><circle cx="100.5" cy="256.7" r="3.8"/><circle cx="145.4" cy="245.9" r="3.8"/><circle cx="79.1" cy="263.6" r="3.8"/><circle cx="78.5" cy="265.7" r="3.8"/><circle cx="139.6" cy="255.7" r="3.8"/><circle cx="140.7" cy="251.6" r="3.8"/><circle cx="73.0" cy="263.8" r="3.8"/><circle cx="89.3" cy="257.6" r="3.8"/><circle cx="90.4" cy="266.3" r="3.8"/><circle cx="126.6" cy="261.5" r="3.8"/><circle cx="143.5" cy="255.6" r="3.8"/><circle cx="88.5" cy="260.7" r="3.8"/><circle cx="150.8" cy="250.9" r="3.8"/><circle cx="98.8" cy="257.2" r="3.8"/><circle cx="76.9" cy="265.8" r="3.8"/><circle cx="144.4" cy="246.7" r="3.8"/><circle cx="105.5" cy="253.9" r="3.8"/><circle cx="146.5" cy="258.2" r="3.8"/><circle cx="115.8" cy="270.0" r="3.8"/><circle cx="108.7" cy="264.1" r="3.8"/><circle cx="124.9" cy="254.1" r="3.8"/><circle cx="117.0" cy="253.3" r="3.8"/><circle cx="143.6" cy="244.8" r="3.8"/><circle cx="92.4" cy="259.0" r="3.8"/><circle cx="148.5" cy="246.1" r="3.8"/><circle cx="89.3" cy="262.8" r="3.8"/><circle cx="80.5" cy="260.2" r="3.8"/><circle cx="141.5" cy="251.6" r="3.8"/><circle cx="141.5" cy="260.4" r="3.8"/><circle cx="78.9" cy="260.9" r="3.8"/><circle cx="92.2" cy="256.2" r="3.8"/><circle cx="86.3" cy="263.5" r="3.8"/><circle cx="126.5" cy="253.1" r="3.8"/><circle cx="106.6" cy="257.4" r="3.8"/><circle cx="75.0" cy="262.1" r="3.8"/><circle cx="78.2" cy="263.4" r="3.8"/><circle cx="137.3" cy="247.3" r="3.8"/><circle cx="85.7" cy="261.4" r="3.8"/><circle cx="146.3" cy="257.5" r="3.8"/><circle cx="73.4" cy="261.3" r="3.8"/><circle cx="140.5" cy="251.4" r="3.8"/><circle cx="72.9" cy="263.3" r="3.8"/><circle cx="133.7" cy="261.4" r="3.8"/><circle cx="85.7" cy="258.3" r="3.8"/><circle cx="106.4" cy="264.5" r="3.8"/><circle cx="123.9" cy="260.2" r="3.8"/><circle cx="101.1" cy="261.5" r="3.8"/><circle cx="129.6" cy="247.9" r="3.8"/><circle cx="117.1" cy="253.6" r="3.8"/><circle cx="85.9" cy="264.0" r="3.8"/><circle cx="77.4" cy="260.4" r="3.8"/><circle cx="111.6" cy="256.6" r="3.8"/><circle cx="113.1" cy="247.7" r="3.8"/><circle cx="101.4" cy="268.7" r="3.8"/><circle cx="139.3" cy="251.7" r="3.8"/><circle cx="85.6" cy="267.5" r="3.8"/><circle cx="89.7" cy="256.0" r="3.8"/><circle cx="119.6" cy="255.8" r="3.8"/><circle cx="119.0" cy="267.5" r="3.8"/><circle cx="73.9" cy="262.9" r="3.8"/><circle cx="120.4" cy="250.6" r="3.8"/><circle cx="125.6" cy="255.1" r="3.8"/><circle cx="147.9" cy="246.5" r="3.8"/><circle cx="84.5" cy="259.8" r="3.8"/><circle cx="88.8" cy="267.6" r="3.8"/><circle cx="81.7" cy="260.5" r="3.8"/><circle cx="118.8" cy="268.0" r="3.8"/><circle cx="96.1" cy="256.2" r="3.8"/><circle cx="79.1" cy="259.7" r="3.8"/><circle cx="96.1" cy="268.8" r="3.8"/><circle cx="125.0" cy="266.9" r="3.8"/><circle cx="91.3" cy="257.0" r="3.8"/><circle cx="126.2" cy="245.6" r="3.8"/><circle cx="95.0" cy="259.5" r="3.8"/><circle cx="80.6" cy="258.8" r="3.8"/><circle cx="92.9" cy="268.0" r="3.8"/><circle cx="147.3" cy="245.5" r="3.8"/><circle cx="133.3" cy="259.6" r="3.8"/><circle cx="74.5" cy="263.6" r="3.8"/><circle cx="142.8" cy="246.0" r="3.8"/><circle cx="140.6" cy="243.5" r="3.8"/><circle cx="132.4" cy="258.7" r="3.8"/><circle cx="73.9" cy="261.0" r="3.8"/><circle cx="86.2" cy="265.8" r="3.8"/><circle cx="92.0" cy="258.2" r="3.8"/><circle cx="114.5" cy="253.2" r="3.8"/><circle cx="90.4" cy="259.1" r="3.8"/><circle cx="127.1" cy="263.0" r="3.8"/><circle cx="145.2" cy="242.8" r="3.8"/><circle cx="102.5" cy="270.6" r="3.8"/><circle cx="95.6" cy="257.6" r="3.8"/><circle cx="104.0" cy="268.3" r="3.8"/><circle cx="131.5" cy="259.3" r="3.8"/><circle cx="128.7" cy="256.5" r="3.8"/><circle cx="90.6" cy="260.2" r="3.8"/><circle cx="75.8" cy="261.7" r="3.8"/><circle cx="85.6" cy="257.9" r="3.8"/><circle cx="109.0" cy="255.4" r="3.8"/><circle cx="139.3" cy="260.9" r="3.8"/><circle cx="76.0" cy="260.9" r="3.8"/><circle cx="122.9" cy="255.8" r="3.8"/><circle cx="97.9" cy="263.0" r="3.8"/><circle cx="126.4" cy="261.7" r="3.8"/><circle cx="77.9" cy="265.9" r="3.8"/><circle cx="110.2" cy="256.5" r="3.8"/><circle cx="82.5" cy="260.5" r="3.8"/><circle cx="79.7" cy="266.3" r="3.8"/><circle cx="91.1" cy="260.4" r="3.8"/><circle cx="105.2" cy="254.0" r="3.8"/><circle cx="117.8" cy="269.2" r="3.8"/><circle cx="102.5" cy="267.6" r="3.8"/><circle cx="142.3" cy="243.4" r="3.8"/><circle cx="77.8" cy="260.8" r="3.8"/><circle cx="111.6" cy="268.7" r="3.8"/><circle cx="137.6" cy="251.6" r="3.8"/><circle cx="129.2" cy="263.1" r="3.8"/><circle cx="112.7" cy="261.7" r="3.8"/><circle cx="94.2" cy="256.3" r="3.8"/><circle cx="86.1" cy="263.6" r="3.8"/><circle cx="82.7" cy="258.2" r="3.8"/><circle cx="120.0" cy="250.4" r="3.8"/><circle cx="82.7" cy="265.6" r="3.8"/><circle cx="75.1" cy="261.2" r="3.8"/><circle cx="108.8" cy="262.4" r="3.8"/><circle cx="80.3" cy="264.7" r="3.8"/><circle cx="88.0" cy="259.7" r="3.8"/><circle cx="90.1" cy="262.8" r="3.8"/><circle cx="97.9" cy="268.3" r="3.8"/><circle cx="93.9" cy="257.2" r="3.8"/><circle cx="82.8" cy="257.4" r="3.8"/><circle cx="98.4" cy="266.2" r="3.8"/><circle cx="139.2" cy="251.4" r="3.8"/><circle cx="73.2" cy="264.1" r="3.8"/><circle cx="141.9" cy="244.4" r="3.8"/><circle cx="94.4" cy="261.5" r="3.8"/><circle cx="88.0" cy="262.7" r="3.8"/><circle cx="77.3" cy="263.4" r="3.8"/><circle cx="147.6" cy="245.3" r="3.8"/><circle cx="145.2" cy="258.9" r="3.8"/><circle cx="74.6" cy="266.2" r="3.8"/><circle cx="141.3" cy="254.2" r="3.8"/><circle cx="80.1" cy="265.5" r="3.8"/><circle cx="96.9" cy="267.9" r="3.8"/><circle cx="81.5" cy="260.5" r="3.8"/><circle cx="106.1" cy="257.6" r="3.8"/><circle cx="85.6" cy="265.5" r="3.8"/><circle cx="74.1" cy="264.1" r="3.8"/><circle cx="74.0" cy="265.6" r="3.8"/><circle cx="113.0" cy="260.0" r="3.8"/><circle cx="89.6" cy="261.1" r="3.8"/><circle cx="98.6" cy="263.5" r="3.8"/><circle cx="99.6" cy="252.7" r="3.8"/><circle cx="103.7" cy="255.3" r="3.8"/><circle cx="129.4" cy="253.4" r="3.8"/><circle cx="102.4" cy="253.3" r="3.8"/><circle cx="99.0" cy="254.1" r="3.8"/><circle cx="105.4" cy="251.0" r="3.8"/><circle cx="75.9" cy="265.1" r="3.8"/><circle cx="105.5" cy="251.3" r="3.8"/><circle cx="94.9" cy="268.1" r="3.8"/><circle cx="136.7" cy="261.8" r="3.8"/><circle cx="132.7" cy="246.5" r="3.8"/><circle cx="103.9" cy="270.7" r="3.8"/><circle cx="80.4" cy="266.1" r="3.8"/><circle cx="75.2" cy="262.7" r="3.8"/><circle cx="80.0" cy="266.4" r="3.8"/><circle cx="132.7" cy="246.7" r="3.8"/><circle cx="142.9" cy="246.3" r="3.8"/><circle cx="105.1" cy="256.5" r="3.8"/><circle cx="81.4" cy="259.5" r="3.8"/><circle cx="120.1" cy="266.6" r="3.8"/><circle cx="129.8" cy="246.5" r="3.8"/><circle cx="116.2" cy="254.7" r="3.8"/><circle cx="109.2" cy="261.7" r="3.8"/><circle cx="77.0" cy="266.9" r="3.8"/><circle cx="96.2" cy="265.8" r="3.8"/><circle cx="149.9" cy="251.0" r="3.8"/><circle cx="127.9" cy="253.4" r="3.8"/><circle cx="126.0" cy="244.2" r="3.8"/><circle cx="86.0" cy="264.4" r="3.8"/><circle cx="111.8" cy="262.7" r="3.8"/><circle cx="72.9" cy="261.5" r="3.8"/><circle cx="114.5" cy="257.1" r="3.8"/><circle cx="140.5" cy="245.3" r="3.8"/><circle cx="117.7" cy="247.1" r="3.8"/><circle cx="93.2" cy="256.1" r="3.8"/><circle cx="84.1" cy="263.5" r="3.8"/><circle cx="82.8" cy="264.0" r="3.8"/><circle cx="78.7" cy="266.6" r="3.8"/><circle cx="79.5" cy="260.0" r="3.8"/><circle cx="138.1" cy="257.5" r="3.8"/><circle cx="86.7" cy="256.9" r="3.8"/><circle cx="109.8" cy="256.1" r="3.8"/><circle cx="100.0" cy="268.2" r="3.8"/><circle cx="85.7" cy="266.9" r="3.8"/><circle cx="107.2" cy="257.8" r="3.8"/><circle cx="74.8" cy="265.3" r="3.8"/><circle cx="108.8" cy="268.8" r="3.8"/><circle cx="82.5" cy="263.9" r="3.8"/><circle cx="116.7" cy="265.4" r="3.8"/><circle cx="89.9" cy="259.5" r="3.8"/><circle cx="139.9" cy="257.1" r="3.8"/><circle cx="73.0" cy="265.6" r="3.8"/><circle cx="101.7" cy="264.8" r="3.8"/><circle cx="84.2" cy="258.7" r="3.8"/><circle cx="74.0" cy="262.8" r="3.8"/><circle cx="121.5" cy="265.2" r="3.8"/><circle cx="86.8" cy="263.0" r="3.8"/><circle cx="130.2" cy="254.5" r="3.8"/><circle cx="116.7" cy="268.8" r="3.8"/><circle cx="139.0" cy="243.4" r="3.8"/><circle cx="84.8" cy="265.8" r="3.8"/><circle cx="126.2" cy="250.8" r="3.8"/><circle cx="91.3" cy="257.9" r="3.8"/><circle cx="115.7" cy="262.8" r="3.8"/><circle cx="148.8" cy="249.4" r="3.8"/><circle cx="121.7" cy="265.4" r="3.8"/><circle cx="124.2" cy="256.7" r="3.8"/><circle cx="83.3" cy="264.0" r="3.8"/><circle cx="142.0" cy="245.3" r="3.8"/><circle cx="77.2" cy="266.4" r="3.8"/><circle cx="79.1" cy="259.6" r="3.8"/><circle cx="121.3" cy="260.4" r="3.8"/><circle cx="125.3" cy="246.4" r="3.8"/><circle cx="93.8" cy="267.2" r="3.8"/><circle cx="140.1" cy="242.7" r="3.8"/><circle cx="142.3" cy="259.2" r="3.8"/><circle cx="82.9" cy="259.1" r="3.8"/><circle cx="135.8" cy="258.7" r="3.8"/><circle cx="133.6" cy="255.8" r="3.8"/><circle cx="76.8" cy="260.7" r="3.8"/><circle cx="82.8" cy="261.1" r="3.8"/><circle cx="73.4" cy="262.5" r="3.8"/><circle cx="123.4" cy="253.9" r="3.8"/><circle cx="147.3" cy="250.4" r="3.8"/><circle cx="114.6" cy="247.9" r="3.8"/><circle cx="99.4" cy="265.4" r="3.8"/><circle cx="122.4" cy="258.0" r="3.8"/><circle cx="137.2" cy="243.6" r="3.8"/><circle cx="80.7" cy="258.8" r="3.8"/><circle cx="127.7" cy="264.1" r="3.8"/><circle cx="103.8" cy="260.1" r="3.8"/><circle cx="81.6" cy="262.9" r="3.8"/><circle cx="134.3" cy="247.8" r="3.8"/><circle cx="88.1" cy="258.9" r="3.8"/><circle cx="104.4" cy="252.7" r="3.8"/><circle cx="75.9" cy="265.4" r="3.8"/><circle cx="130.0" cy="256.6" r="3.8"/><circle cx="96.7" cy="259.4" r="3.8"/><circle cx="76.1" cy="266.1" r="3.8"/><circle cx="82.9" cy="260.3" r="3.8"/><circle cx="104.7" cy="257.6" r="3.8"/><circle cx="84.7" cy="262.2" r="3.8"/><circle cx="127.0" cy="259.7" r="3.8"/><circle cx="92.7" cy="259.3" r="3.8"/><circle cx="135.4" cy="256.0" r="3.8"/><circle cx="80.7" cy="262.6" r="3.8"/><circle cx="111.2" cy="250.9" r="3.8"/><circle cx="139.5" cy="247.4" r="3.8"/><circle cx="89.3" cy="265.3" r="3.8"/><circle cx="79.8" cy="260.4" r="3.8"/><circle cx="91.1" cy="262.2" r="3.8"/><circle cx="91.2" cy="257.1" r="3.8"/><circle cx="124.6" cy="245.7" r="3.8"/><circle cx="76.9" cy="262.6" r="3.8"/><circle cx="130.8" cy="258.5" r="3.8"/><circle cx="82.3" cy="264.2" r="3.8"/><circle cx="82.9" cy="261.8" r="3.8"/><circle cx="96.5" cy="265.7" r="3.8"/><circle cx="104.6" cy="262.6" r="3.8"/><circle cx="79.1" cy="264.1" r="3.8"/><circle cx="125.7" cy="263.1" r="3.8"/><circle cx="110.8" cy="264.7" r="3.8"/><circle cx="84.4" cy="265.5" r="3.8"/><circle cx="128.8" cy="259.1" r="3.8"/><circle cx="120.1" cy="260.8" r="3.8"/><circle cx="90.1" cy="263.6" r="3.8"/><circle cx="98.1" cy="265.6" r="3.8"/><circle cx="115.6" cy="252.7" r="3.8"/><circle cx="100.9" cy="262.7" r="3.8"/><circle cx="119.7" cy="267.5" r="3.8"/><circle cx="117.9" cy="264.3" r="3.8"/><circle cx="103.7" cy="269.1" r="3.8"/><circle cx="108.2" cy="252.6" r="3.8"/><circle cx="144.9" cy="251.2" r="3.8"/><circle cx="110.9" cy="260.1" r="3.8"/><circle cx="105.6" cy="263.5" r="3.8"/><circle cx="106.4" cy="258.0" r="3.8"/><circle cx="83.2" cy="264.6" r="3.8"/><circle cx="127.7" cy="245.6" r="3.8"/><circle cx="93.2" cy="255.4" r="3.8"/><circle cx="96.6" cy="253.6" r="3.8"/><circle cx="98.2" cy="264.2" r="3.8"/><circle cx="86.8" cy="259.3" r="3.8"/><circle cx="144.9" cy="251.3" r="3.8"/><circle cx="131.4" cy="251.7" r="3.8"/><circle cx="78.4" cy="265.9" r="3.8"/><circle cx="116.1" cy="257.6" r="3.8"/><circle cx="84.2" cy="267.4" r="3.8"/><circle cx="116.5" cy="267.2" r="3.8"/><circle cx="102.0" cy="256.8" r="3.8"/><circle cx="78.1" cy="265.8" r="3.8"/><circle cx="136.1" cy="248.5" r="3.8"/><circle cx="86.0" cy="261.7" r="3.8"/><circle cx="72.9" cy="265.0" r="3.8"/><circle cx="85.4" cy="260.4" r="3.8"/><circle cx="98.8" cy="263.2" r="3.8"/><circle cx="93.7" cy="269.1" r="3.8"/><circle cx="74.8" cy="266.1" r="3.8"/><circle cx="129.8" cy="245.7" r="3.8"/><circle cx="116.0" cy="247.2" r="3.8"/><circle cx="146.0" cy="253.2" r="3.8"/><circle cx="76.9" cy="261.0" r="3.8"/><circle cx="129.0" cy="251.2" r="3.8"/><circle cx="141.3" cy="256.8" r="3.8"/><circle cx="140.0" cy="253.9" r="3.8"/><circle cx="119.1" cy="266.7" r="3.8"/><circle cx="135.0" cy="247.4" r="3.8"/><circle cx="107.1" cy="264.7" r="3.8"/><circle cx="139.2" cy="253.1" r="3.8"/><circle cx="84.7" cy="258.9" r="3.8"/><circle cx="74.8" cy="263.5" r="3.8"/><circle cx="103.9" cy="260.2" r="3.8"/><circle cx="137.3" cy="241.7" r="3.8"/><circle cx="102.0" cy="261.6" r="3.8"/><circle cx="135.1" cy="250.7" r="3.8"/><circle cx="146.9" cy="243.4" r="3.8"/><circle cx="116.2" cy="247.5" r="3.8"/><circle cx="120.4" cy="267.4" r="3.8"/><circle cx="149.1" cy="250.1" r="3.8"/><circle cx="140.7" cy="243.6" r="3.8"/><circle cx="115.3" cy="254.3" r="3.8"/><circle cx="94.0" cy="261.1" r="3.8"/><circle cx="128.5" cy="248.7" r="3.8"/><circle cx="98.3" cy="262.2" r="3.8"/><circle cx="88.7" cy="266.1" r="3.8"/><circle cx="104.9" cy="255.7" r="3.8"/><circle cx="148.4" cy="252.6" r="3.8"/><circle cx="91.4" cy="259.4" r="3.8"/><circle cx="111.9" cy="262.1" r="3.8"/><circle cx="74.1" cy="265.3" r="3.8"/><circle cx="108.4" cy="250.2" r="3.8"/><circle cx="73.0" cy="262.0" r="3.8"/><circle cx="113.8" cy="262.3" r="3.8"/><circle cx="141.9" cy="253.5" r="3.8"/><circle cx="115.4" cy="262.9" r="3.8"/><circle cx="120.2" cy="251.0" r="3.8"/><circle cx="101.2" cy="265.2" r="3.8"/><circle cx="81.4" cy="258.9" r="3.8"/><circle cx="142.3" cy="254.2" r="3.8"/><circle cx="133.4" cy="258.9" r="3.8"/><circle cx="86.3" cy="260.3" r="3.8"/><circle cx="90.5" cy="261.1" r="3.8"/><circle cx="144.3" cy="243.4" r="3.8"/><circle cx="74.1" cy="261.3" r="3.8"/><circle cx="110.9" cy="268.4" r="3.8"/><circle cx="73.2" cy="263.2" r="3.8"/><circle cx="144.6" cy="259.1" r="3.8"/><circle cx="97.6" cy="254.7" r="3.8"/><circle cx="83.3" cy="259.4" r="3.8"/><circle cx="73.0" cy="264.8" r="3.8"/><circle cx="147.5" cy="242.2" r="3.8"/><circle cx="78.3" cy="259.7" r="3.8"/><circle cx="85.3" cy="265.0" r="3.8"/><circle cx="74.5" cy="265.3" r="3.8"/><circle cx="136.6" cy="257.0" r="3.8"/><circle cx="115.6" cy="263.2" r="3.8"/><circle cx="144.1" cy="246.0" r="3.8"/><circle cx="123.5" cy="245.7" r="3.8"/><circle cx="117.5" cy="265.3" r="3.8"/><circle cx="90.0" cy="264.9" r="3.8"/><circle cx="137.1" cy="252.4" r="3.8"/><circle cx="94.1" cy="262.6" r="3.8"/><circle cx="119.9" cy="249.5" r="3.8"/><circle cx="93.8" cy="263.6" r="3.8"/><circle cx="98.0" cy="259.2" r="3.8"/><circle cx="145.4" cy="255.6" r="3.8"/><circle cx="88.7" cy="256.0" r="3.8"/><circle cx="122.3" cy="264.6" r="3.8"/><circle cx="113.6" cy="272.1" r="3.8"/><circle cx="113.1" cy="254.5" r="3.8"/><circle cx="139.8" cy="249.8" r="3.8"/><circle cx="113.2" cy="270.0" r="3.8"/><circle cx="88.0" cy="256.4" r="3.8"/><circle cx="98.3" cy="262.9" r="3.8"/><circle cx="139.7" cy="242.2" r="3.8"/><circle cx="132.4" cy="260.7" r="3.8"/><circle cx="87.4" cy="267.3" r="3.8"/><circle cx="120.6" cy="266.9" r="3.8"/><circle cx="76.1" cy="263.9" r="3.8"/><circle cx="82.6" cy="265.8" r="3.8"/><circle cx="84.7" cy="263.7" r="3.8"/><circle cx="101.8" cy="255.3" r="3.8"/><circle cx="126.7" cy="260.6" r="3.8"/><circle cx="76.2" cy="265.5" r="3.8"/><circle cx="84.6" cy="263.7" r="3.8"/><circle cx="139.5" cy="252.5" r="3.8"/><circle cx="112.1" cy="252.0" r="3.8"/><circle cx="81.3" cy="264.8" r="3.8"/><circle cx="110.0" cy="257.2" r="3.8"/><circle cx="79.5" cy="259.0" r="3.8"/><circle cx="94.6" cy="255.6" r="3.8"/><circle cx="130.1" cy="247.3" r="3.8"/><circle cx="92.4" cy="262.0" r="3.8"/><circle cx="73.8" cy="267.1" r="3.8"/><circle cx="103.5" cy="261.5" r="3.8"/><circle cx="129.3" cy="252.5" r="3.8"/><circle cx="128.2" cy="262.0" r="3.8"/><circle cx="86.0" cy="257.4" r="3.8"/><circle cx="81.3" cy="259.3" r="3.8"/><circle cx="109.4" cy="267.3" r="3.8"/><circle cx="145.6" cy="257.6" r="3.8"/><circle cx="112.9" cy="256.6" r="3.8"/><circle cx="146.8" cy="246.4" r="3.8"/><circle cx="116.6" cy="268.6" r="3.8"/><circle cx="96.1" cy="260.5" r="3.8"/><circle cx="147.4" cy="258.4" r="3.8"/><circle cx="74.0" cy="262.4" r="3.8"/><circle cx="141.2" cy="260.2" r="3.8"/><circle cx="74.4" cy="265.4" r="3.8"/><circle cx="117.2" cy="269.2" r="3.8"/><circle cx="79.2" cy="265.7" r="3.8"/><circle cx="119.9" cy="253.0" r="3.8"/><circle cx="127.3" cy="246.8" r="3.8"/><circle cx="86.2" cy="258.3" r="3.8"/><circle cx="80.6" cy="260.9" r="3.8"/><circle cx="119.9" cy="246.4" r="3.8"/><circle cx="82.2" cy="257.9" r="3.8"/><circle cx="83.8" cy="268.0" r="3.8"/><circle cx="139.8" cy="245.6" r="3.8"/><circle cx="76.7" cy="267.0" r="3.8"/><circle cx="115.5" cy="257.3" r="3.8"/><circle cx="133.5" cy="252.9" r="3.8"/><circle cx="79.1" cy="261.1" r="3.8"/><circle cx="123.2" cy="258.2" r="3.8"/><circle cx="138.1" cy="248.1" r="3.8"/><circle cx="79.9" cy="261.0" r="3.8"/><circle cx="91.7" cy="257.3" r="3.8"/><circle cx="90.5" cy="267.2" r="3.8"/><circle cx="148.7" cy="241.4" r="3.8"/><circle cx="119.1" cy="251.1" r="3.8"/><circle cx="88.2" cy="259.3" r="3.8"/><circle cx="93.9" cy="270.2" r="3.8"/><circle cx="143.4" cy="244.3" r="3.8"/><circle cx="140.5" cy="244.0" r="3.8"/><circle cx="88.8" cy="268.0" r="3.8"/><circle cx="131.9" cy="250.6" r="3.8"/><circle cx="72.9" cy="265.6" r="3.8"/><circle cx="81.6" cy="262.4" r="3.8"/><circle cx="83.7" cy="263.4" r="3.8"/><circle cx="81.3" cy="265.4" r="3.8"/><circle cx="82.3" cy="259.0" r="3.8"/><circle cx="113.8" cy="258.6" r="3.8"/><circle cx="82.9" cy="263.9" r="3.8"/><circle cx="132.4" cy="255.2" r="3.8"/><circle cx="75.2" cy="265.1" r="3.8"/><circle cx="123.9" cy="244.9" r="3.8"/><circle cx="91.7" cy="267.5" r="3.8"/><circle cx="104.0" cy="249.5" r="3.8"/><circle cx="102.7" cy="267.2" r="3.8"/><circle cx="81.7" cy="265.9" r="3.8"/><circle cx="80.3" cy="262.0" r="3.8"/><circle cx="73.0" cy="264.0" r="3.8"/><circle cx="105.9" cy="252.4" r="3.8"/><circle cx="132.8" cy="260.5" r="3.8"/><circle cx="123.0" cy="254.3" r="3.8"/><circle cx="75.0" cy="266.4" r="3.8"/><circle cx="104.2" cy="260.4" r="3.8"/><circle cx="107.7" cy="248.2" r="3.8"/><circle cx="84.0" cy="259.5" r="3.8"/><circle cx="85.8" cy="265.9" r="3.8"/><circle cx="76.6" cy="264.8" r="3.8"/><circle cx="73.3" cy="264.3" r="3.8"/><circle cx="106.5" cy="263.9" r="3.8"/><circle cx="137.9" cy="256.4" r="3.8"/><circle cx="78.0" cy="263.3" r="3.8"/><circle cx="87.8" cy="257.9" r="3.8"/><circle cx="78.8" cy="264.2" r="3.8"/><circle cx="79.4" cy="263.8" r="3.8"/><circle cx="80.4" cy="266.5" r="3.8"/><circle cx="95.7" cy="260.0" r="3.8"/><circle cx="106.7" cy="257.6" r="3.8"/><circle cx="129.1" cy="251.1" r="3.8"/><circle cx="91.7" cy="260.9" r="3.8"/><circle cx="131.7" cy="263.3" r="3.8"/><circle cx="135.8" cy="244.6" r="3.8"/><circle cx="146.7" cy="257.7" r="3.8"/><circle cx="98.3" cy="263.1" r="3.8"/><circle cx="107.1" cy="251.0" r="3.8"/><circle cx="105.0" cy="250.8" r="3.8"/><circle cx="147.8" cy="255.6" r="3.8"/><circle cx="116.0" cy="267.1" r="3.8"/><circle cx="139.4" cy="243.7" r="3.8"/><circle cx="86.8" cy="264.4" r="3.8"/><circle cx="108.1" cy="268.4" r="3.8"/><circle cx="85.8" cy="262.7" r="3.8"/><circle cx="146.0" cy="247.1" r="3.8"/><circle cx="117.2" cy="249.4" r="3.8"/><circle cx="146.5" cy="250.8" r="3.8"/><circle cx="101.8" cy="261.1" r="3.8"/><circle cx="78.1" cy="260.6" r="3.8"/><circle cx="97.1" cy="257.8" r="3.8"/><circle cx="76.2" cy="264.0" r="3.8"/><circle cx="113.9" cy="260.3" r="3.8"/><circle cx="82.6" cy="264.8" r="3.8"/><circle cx="108.6" cy="261.9" r="3.8"/><circle cx="90.0" cy="258.8" r="3.8"/><circle cx="105.6" cy="257.7" r="3.8"/><circle cx="73.1" cy="263.0" r="3.8"/><circle cx="85.0" cy="263.2" r="3.8"/><circle cx="88.1" cy="268.0" r="3.8"/><circle cx="128.6" cy="247.6" r="3.8"/><circle cx="138.1" cy="251.3" r="3.8"/><circle cx="95.7" cy="260.4" r="3.8"/><circle cx="77.3" cy="261.2" r="3.8"/><circle cx="125.5" cy="248.1" r="3.8"/><circle cx="93.0" cy="264.1" r="3.8"/><circle cx="136.0" cy="258.8" r="3.8"/><circle cx="125.5" cy="259.8" r="3.8"/><circle cx="102.6" cy="265.6" r="3.8"/><circle cx="142.4" cy="243.7" r="3.8"/><circle cx="73.0" cy="265.2" r="3.8"/><circle cx="104.4" cy="269.0" r="3.8"/><circle cx="98.0" cy="266.7" r="3.8"/><circle cx="113.7" cy="256.0" r="3.8"/><circle cx="101.2" cy="264.5" r="3.8"/><circle cx="95.9" cy="262.1" r="3.8"/><circle cx="90.8" cy="266.6" r="3.8"/><circle cx="104.5" cy="259.0" r="3.8"/><circle cx="89.5" cy="257.7" r="3.8"/><circle cx="111.5" cy="248.5" r="3.8"/><circle cx="90.9" cy="267.4" r="3.8"/><circle cx="146.7" cy="245.5" r="3.8"/><circle cx="142.0" cy="243.0" r="3.8"/><circle cx="110.0" cy="259.5" r="3.8"/><circle cx="128.8" cy="255.3" r="3.8"/><circle cx="106.0" cy="260.2" r="3.8"/><circle cx="95.8" cy="259.1" r="3.8"/><circle cx="92.9" cy="267.9" r="3.8"/><circle cx="106.7" cy="251.8" r="3.8"/><circle cx="96.7" cy="262.1" r="3.8"/><circle cx="138.9" cy="260.6" r="3.8"/><circle cx="99.7" cy="263.5" r="3.8"/><circle cx="92.3" cy="262.4" r="3.8"/><circle cx="80.7" cy="261.3" r="3.8"/><circle cx="133.7" cy="253.6" r="3.8"/><circle cx="140.4" cy="255.9" r="3.8"/><circle cx="149.9" cy="256.0" r="3.8"/><circle cx="79.9" cy="261.4" r="3.8"/><circle cx="105.0" cy="254.0" r="3.8"/><circle cx="115.7" cy="260.7" r="3.8"/><circle cx="150.3" cy="251.8" r="3.8"/><circle cx="97.5" cy="265.7" r="3.8"/><circle cx="121.1" cy="246.0" r="3.8"/><circle cx="135.3" cy="254.6" r="3.8"/><circle cx="82.3" cy="262.9" r="3.8"/><circle cx="86.8" cy="264.0" r="3.8"/><circle cx="150.6" cy="250.8" r="3.8"/><circle cx="77.9" cy="260.9" r="3.8"/><circle cx="77.2" cy="260.7" r="3.8"/><circle cx="106.4" cy="266.3" r="3.8"/><circle cx="131.9" cy="245.2" r="3.8"/><circle cx="128.5" cy="250.9" r="3.8"/><circle cx="93.1" cy="257.0" r="3.8"/><circle cx="76.8" cy="266.2" r="3.8"/><circle cx="92.7" cy="261.0" r="3.8"/><circle cx="74.7" cy="266.0" r="3.8"/><circle cx="146.8" cy="249.4" r="3.8"/><circle cx="85.7" cy="256.8" r="3.8"/><circle cx="136.5" cy="248.6" r="3.8"/><circle cx="132.8" cy="249.8" r="3.8"/><circle cx="146.9" cy="250.3" r="3.8"/><circle cx="85.3" cy="261.4" r="3.8"/><circle cx="83.9" cy="260.6" r="3.8"/><circle cx="103.3" cy="265.7" r="3.8"/><circle cx="80.9" cy="261.8" r="3.8"/><circle cx="148.0" cy="246.7" r="3.8"/><circle cx="77.6" cy="263.6" r="3.8"/><circle cx="96.8" cy="254.3" r="3.8"/><circle cx="133.7" cy="250.5" r="3.8"/><circle cx="82.0" cy="261.0" r="3.8"/><circle cx="73.9" cy="264.7" r="3.8"/><circle cx="79.9" cy="264.8" r="3.8"/><circle cx="87.1" cy="266.2" r="3.8"/><circle cx="100.0" cy="267.8" r="3.8"/><circle cx="80.1" cy="261.9" r="3.8"/><circle cx="156.6" cy="253.7" r="3.8"/><circle cx="172.6" cy="245.7" r="3.8"/><circle cx="160.1" cy="249.9" r="3.8"/><circle cx="149.7" cy="257.1" r="3.8"/><circle cx="165.8" cy="247.0" r="3.8"/><circle cx="162.5" cy="263.1" r="3.8"/><circle cx="156.3" cy="249.6" r="3.8"/><circle cx="152.0" cy="258.7" r="3.8"/><circle cx="170.4" cy="253.6" r="3.8"/><circle cx="161.2" cy="254.4" r="3.8"/><circle cx="153.6" cy="250.7" r="3.8"/><circle cx="164.4" cy="241.4" r="3.8"/><circle cx="161.9" cy="246.1" r="3.8"/><circle cx="148.4" cy="256.2" r="3.8"/><circle cx="151.0" cy="253.5" r="3.8"/><circle cx="164.6" cy="243.3" r="3.8"/><circle cx="149.1" cy="245.1" r="3.8"/><circle cx="160.0" cy="246.5" r="3.8"/><circle cx="154.3" cy="254.8" r="3.8"/><circle cx="152.3" cy="252.2" r="3.8"/><circle cx="149.5" cy="249.4" r="3.8"/><circle cx="157.3" cy="244.0" r="3.8"/><circle cx="171.4" cy="249.5" r="3.8"/><circle cx="170.1" cy="232.5" r="3.8"/><circle cx="149.7" cy="250.2" r="3.8"/><circle cx="165.0" cy="249.8" r="3.8"/><circle cx="134.9" cy="231.9" r="3.8"/><circle cx="136.5" cy="234.9" r="3.8"/><circle cx="148.9" cy="236.9" r="3.8"/><circle cx="152.9" cy="237.9" r="3.8"/><circle cx="159.9" cy="232.5" r="3.8"/><circle cx="292.1" cy="189.2" r="3.8"/><circle cx="290.0" cy="177.5" r="3.8"/><circle cx="205.7" cy="201.8" r="3.8"/><circle cx="193.9" cy="215.5" r="3.8"/><circle cx="196.7" cy="217.7" r="3.8"/><circle cx="208.5" cy="218.9" r="3.8"/><circle cx="194.9" cy="224.5" r="3.8"/><circle cx="211.0" cy="228.9" r="3.8"/><circle cx="201.3" cy="230.5" r="3.8"/><circle cx="169.5" cy="217.3" r="3.8"/><circle cx="167.3" cy="219.7" r="3.8"/><circle cx="229.2" cy="221.9" r="3.8"/><circle cx="255.4" cy="221.3" r="3.8"/><circle cx="251.0" cy="225.5" r="3.8"/><circle cx="254.2" cy="228.9" r="3.8"/><circle cx="249.2" cy="229.1" r="3.8"/><circle cx="235.2" cy="232.5" r="3.8"/><circle cx="231.8" cy="233.9" r="3.8"/><circle cx="230.8" cy="237.3" r="3.8"/><circle cx="226.2" cy="241.3" r="3.8"/><circle cx="244.2" cy="244.3" r="3.8"/><circle cx="239.2" cy="249.9" r="3.8"/><circle cx="285.3" cy="250.4" r="3.8"/><circle cx="218.4" cy="259.6" r="3.8"/><circle cx="207.3" cy="272.6" r="3.8"/><circle cx="190.5" cy="273.0" r="3.8"/><circle cx="191.5" cy="278.2" r="3.8"/><circle cx="189.5" cy="253.4" r="3.8"/><circle cx="182.9" cy="262.4" r="3.8"/><circle cx="178.7" cy="257.8" r="3.8"/><circle cx="171.9" cy="259.8" r="3.8"/><circle cx="203.7" cy="237.7" r="3.8"/><circle cx="201.7" cy="243.5" r="3.8"/><circle cx="195.3" cy="245.9" r="3.8"/><circle cx="194.3" cy="242.3" r="3.8"/><circle cx="187.3" cy="228.5" r="3.8"/><circle cx="186.5" cy="231.3" r="3.8"/><circle cx="180.1" cy="228.1" r="3.8"/><circle cx="175.5" cy="230.3" r="3.8"/><circle cx="161.2" cy="232.3" r="3.8"/><circle cx="187.1" cy="238.3" r="3.8"/><circle cx="181.5" cy="238.9" r="3.8"/><circle cx="187.1" cy="243.5" r="3.8"/><circle cx="182.5" cy="249.9" r="3.8"/><circle cx="177.9" cy="246.9" r="3.8"/><circle cx="171.9" cy="247.5" r="3.8"/><circle cx="175.5" cy="243.5" r="3.8"/><circle cx="167.9" cy="275.8" r="3.8"/><circle cx="162.4" cy="276.8" r="3.8"/><circle cx="150.0" cy="279.2" r="3.8"/><circle cx="161.0" cy="260.2" r="3.8"/><circle cx="154.0" cy="269.8" r="3.8"/><circle cx="152.0" cy="267.2" r="3.8"/><circle cx="359.8" cy="121.6" r="3.8"/><circle cx="299.4" cy="153.2" r="3.8"/><circle cx="284.8" cy="172.3" r="3.8"/><circle cx="265.3" cy="174.3" r="3.8"/><circle cx="249.3" cy="289.4" r="3.8"/><circle cx="211.4" cy="327.7" r="3.8"/><circle cx="155.6" cy="367.2" r="3.8"/><circle cx="128.4" cy="319.3" r="3.8"/><circle cx="118.0" cy="315.7" r="3.8"/><circle cx="118.0" cy="307.0" r="3.8"/><circle cx="102.5" cy="297.8" r="3.8"/><circle cx="141.2" cy="288.2" r="3.8"/><circle cx="158.8" cy="292.2" r="3.8"/><circle cx="191.5" cy="295.4" r="3.8"/><circle cx="195.5" cy="289.8" r="3.8"/><circle cx="190.7" cy="279.0" r="3.8"/><circle cx="137.6" cy="273.0" r="3.8"/><circle cx="131.6" cy="269.0" r="3.8"/><circle cx="126.8" cy="277.8" r="3.8"/><circle cx="126.8" cy="283.0" r="3.8"/><circle cx="119.7" cy="279.8" r="3.8"/><circle cx="119.7" cy="285.4" r="3.8"/><circle cx="114.9" cy="285.0" r="3.8"/><circle cx="86.6" cy="275.0" r="3.8"/><circle cx="91.0" cy="275.0" r="3.8"/><circle cx="97.3" cy="273.8" r="3.8"/><circle cx="451.1" cy="294.3" r="3.8"/></g></svg>
<span class="t" style="left:54.10px;top:102.60px;font-size:6.6px;line-height:6.6px;color:#777777;transform:scaleX(0.8260);">10K</span>
<span class="t" style="left:56.60px;top:134.08px;font-size:6.6px;line-height:6.6px;color:#777777;transform:scaleX(0.8919);">8K</span>
<span class="t" style="left:56.60px;top:165.56px;font-size:6.6px;line-height:6.6px;color:#777777;transform:scaleX(0.8919);">6K</span>
<span class="t" style="left:56.60px;top:197.03px;font-size:6.6px;line-height:6.6px;color:#777777;transform:scaleX(0.8919);">4K</span>
<span class="t" style="left:56.60px;top:228.51px;font-size:6.6px;line-height:6.6px;color:#777777;transform:scaleX(0.8919);">2K</span>
<span class="t" style="left:56.60px;top:259.99px;font-size:6.6px;line-height:6.6px;color:#777777;transform:scaleX(0.8919);">0K</span>
<span class="t" style="left:54.30px;top:291.47px;font-size:6.6px;line-height:6.6px;color:#777777;transform:scaleX(0.9250);">-2K</span>
<span class="t" style="left:54.30px;top:322.94px;font-size:6.6px;line-height:6.6px;color:#777777;transform:scaleX(0.9250);">-4K</span>
<span class="t" style="left:54.30px;top:354.42px;font-size:6.6px;line-height:6.6px;color:#777777;transform:scaleX(0.9250);">-6K</span>
<span class="t" style="left:54.30px;top:385.90px;font-size:6.6px;line-height:6.6px;color:#777777;transform:scaleX(0.9250);">-8K</span>
<span class="t" style="left:65.40px;top:392.50px;font-size:6.6px;line-height:6.6px;color:#777777;transform:scaleX(0.9167);">0K</span>
<span class="t" style="left:141.77px;top:392.50px;font-size:6.6px;line-height:6.6px;color:#777777;transform:scaleX(0.9167);">5K</span>
<span class="t" style="left:216.73px;top:392.50px;font-size:6.6px;line-height:6.6px;color:#777777;transform:scaleX(0.8686);">10K</span>
<span class="t" style="left:293.10px;top:392.50px;font-size:6.6px;line-height:6.6px;color:#777777;transform:scaleX(0.8686);">15K</span>
<span class="t" style="left:369.47px;top:392.50px;font-size:6.6px;line-height:6.6px;color:#777777;transform:scaleX(0.8686);">20K</span>
<span class="t" style="left:445.83px;top:392.50px;font-size:6.6px;line-height:6.6px;color:#777777;transform:scaleX(0.8686);">25K</span>
<span class="t" style="left:522.20px;top:392.50px;font-size:6.6px;line-height:6.6px;color:#777777;transform:scaleX(0.8686);">30K</span>
<span class="t" style="left:291.60px;top:404.10px;font-size:6.8px;line-height:6.8px;color:#777777;transform:scaleX(0.7760);">Sales</span>
<span class="t" style="left:49.3px;top:247.6px;font-size:6.8px;line-height:6.8px;color:#777777;transform-origin:0 0;transform:rotate(-90deg) scaleX(0.93) translate(-50%,-50%);">Profit</span>
<div class="r" style="left:37.00px;top:481.00px;width:0.70px;height:17.50px;background:#cfcfcf;"></div>
<svg class="r" style="left:23.00px;top:486.50px;" width="13" height="8" viewBox="0 0 13 8"><path d="M3.6 1.6 L2 3.8 L3.6 6" fill="none" stroke="#c9c9c9" stroke-width="0.8"/><path d="M8.6 1.6 L10.2 3.8 L8.6 6" fill="none" stroke="#c9c9c9" stroke-width="0.8"/></svg>
<div class="r" style="left:74.60px;top:481.00px;width:0.70px;height:17.50px;background:#dadada;"></div>
<div class="r" style="left:75.00px;top:481.00px;width:37.80px;height:17.50px;background:#ffffff;"></div>
<div class="r" style="left:75.00px;top:497.30px;width:37.80px;height:1.40px;background:#e2c326;"></div>
<div class="r" style="left:112.80px;top:481.00px;width:18.80px;height:17.30px;background:#f2c811;"></div>
<span class="t" style="left:49.00px;top:487.60px;font-size:6.6px;line-height:6.6px;color:#444;transform:scaleX(0.8032);">Page 1</span>
<span class="t" style="left:85.90px;top:487.60px;font-size:6.6px;line-height:6.6px;color:#444;transform:scaleX(0.8271);">Page 2</span>
<div class="r" style="left:119.40px;top:489.20px;width:5.40px;height:1.30px;background:#6b5a12;"></div>
<div class="r" style="left:121.45px;top:487.10px;width:1.30px;height:5.40px;background:#6b5a12;"></div>
<span class="t" style="left:769.00px;top:76.13px;font-size:7.4px;line-height:7.4px;color:#f0f0f0;font-weight:bold;transform:scaleX(0.8770);">VISUALIZATIONS</span>
<svg class="r" style="left:840.00px;top:75.50px;" width="6" height="9" viewBox="0 0 6 9"><path d="M1.2 1 L4.4 4.2 L1.2 7.4" fill="none" stroke="#d0d0d0" stroke-width="0.9"/></svg>
<svg class="r" style="left:767.30px;top:94.30px;" width="9" height="9" viewBox="0 0 9 9"><rect x="0.6" y="1" width="4" height="2" fill="#f0a24b"/><rect x="4.6" y="1" width="3" height="2" fill="#f2f2f2"/><rect x="0.6" y="3.8" width="6" height="2" fill="#f2f2f2"/><rect x="0.6" y="6.4" width="3" height="2" fill="#f2f2f2"/><rect x="3.6" y="6.4" width="4.6" height="2" fill="#f0a24b"/></svg>
<svg class="r" style="left:780.90px;top:94.30px;" width="9" height="9" viewBox="0 0 9 9"><path d="M0.5 0.5 V8.5 H8.5" fill="none" stroke="#8a8a8a" stroke-width="0.5"/><rect x="1.6" y="3" width="2.2" height="5.4" fill="#f0a24b"/><rect x="1.6" y="1.6" width="2.2" height="1.6" fill="#6aa0d8"/><rect x="4.8" y="1" width="2.2" height="3" fill="#f0a24b"/><rect x="4.8" y="4" width="2.2" height="4.4" fill="#bfbfbf"/></svg>
<svg class="r" style="left:794.90px;top:94.30px;" width="9" height="9" viewBox="0 0 9 9"><rect x="0.6" y="0.8" width="5" height="1.5" fill="#f2f2f2"/><rect x="0.6" y="2.6" width="7.4" height="1.5" fill="#6aa0d8"/><rect x="0.6" y="4.6" width="6" height="1.5" fill="#f0a24b"/><rect x="0.6" y="6.6" width="4" height="1.5" fill="#6aa0d8"/></svg>
<svg class="r" style="left:808.40px;top:94.30px;" width="9" height="9" viewBox="0 0 9 9"><path d="M0.5 0.5 V8.5 H8.5" fill="none" stroke="#8a8a8a" stroke-width="0.5"/><rect x="1.4" y="2.4" width="1.8" height="6" fill="#f0a24b"/><rect x="3.4" y="1" width="1.8" height="7.4" fill="#6aa0d8"/><rect x="5.6" y="3.6" width="1.8" height="4.8" fill="#f0a24b"/></svg>
<svg class="r" style="left:822.00px;top:94.30px;" width="9" height="9" viewBox="0 0 9 9"><rect x="0.6" y="1" width="7.6" height="2" fill="#6aa0d8"/><rect x="0.6" y="3.8" width="7.6" height="2" fill="#bfbfbf"/><rect x="3" y="3.8" width="3.4" height="2" fill="#6aa0d8"/><rect x="0.6" y="6.4" width="7.6" height="2" fill="#6aa0d8"/></svg>
<svg class="r" style="left:835.90px;top:94.30px;" width="9" height="9" viewBox="0 0 9 9"><rect x="1.2" y="0.8" width="2.6" height="7.6" fill="#6aa0d8"/><rect x="1.2" y="5" width="2.6" height="3.4" fill="#bfbfbf"/><rect x="5" y="0.8" width="2.6" height="7.6" fill="#6aa0d8"/><rect x="5" y="4" width="2.6" height="4.4" fill="#bfbfbf"/></svg>
<svg class="r" style="left:767.30px;top:105.90px;" width="9" height="9" viewBox="0 0 9 9"><path d="M0.5 0.5 V8.5 H8.5" fill="none" stroke="#8a8a8a" stroke-width="0.5"/><path d="M1 7 L3.4 4 L5.4 5.4 L8 2" fill="none" stroke="#6aa0d8" stroke-width="0.8"/><path d="M1 5 L3.4 6 L5.6 3 L8 4" fill="none" stroke="#f0a24b" stroke-width="0.6"/></svg>
<svg class="r" style="left:780.90px;top:105.90px;" width="9" height="9" viewBox="0 0 9 9"><path d="M0.6 8.4 V4 L3 2.6 L5 4 L8.4 1.4 V8.4 Z" fill="#f0a24b"/><path d="M0.6 8.4 V6 L3 4.6 L5 5.8 L8.4 4.4 V8.4 Z" fill="#bfbfbf"/></svg>
<svg class="r" style="left:794.90px;top:105.90px;" width="9" height="9" viewBox="0 0 9 9"><path d="M0.4 8.4 V3 L2 1.6 L3.6 3.2 L5.2 1.4 L7 3 L8.6 1.8 V8.4 Z" fill="#f0a24b"/><path d="M0.4 8.4 V5.6 L2 4.2 L3.6 5.8 L5.2 4 L7 5.6 L8.6 4.4 V8.4 Z" fill="#6aa0d8"/><path d="M0.4 8.4 V7.6 L2 6.4 L3.6 7.6 L5.2 6.4 L7 7.6 L8.6 6.6 V8.4 Z" fill="#f0a24b"/></svg>
<svg class="r" style="left:808.40px;top:105.90px;" width="9" height="9" viewBox="0 0 9 9"><path d="M0.5 0.5 V8.5 H8.5" fill="none" stroke="#8a8a8a" stroke-width="0.5"/><rect x="1.6" y="3" width="1.6" height="5.4" fill="#f0a24b"/><rect x="3.8" y="4.6" width="1.6" height="3.8" fill="#f0a24b"/><rect x="6" y="2" width="1.6" height="6.4" fill="#f0a24b"/><rect x="1.6" y="6" width="1.6" height="2.4" fill="#bfbfbf"/><path d="M1.4 2.4 L4.4 3.6 L7.6 1" fill="none" stroke="#bfbfbf" stroke-width="0.5"/></svg>
<svg class="r" style="left:822.00px;top:105.90px;" width="9" height="9" viewBox="0 0 9 9"><path d="M0.5 0.5 V8.5 H8.5" fill="none" stroke="#8a8a8a" stroke-width="0.5"/><rect x="1.4" y="3.4" width="1.5" height="5" fill="#f0a24b"/><rect x="3" y="1.6" width="1.5" height="6.8" fill="#6aa0d8"/><rect x="5" y="4" width="1.5" height="4.4" fill="#f0a24b"/><rect x="6.6" y="2.4" width="1.5" height="6" fill="#6aa0d8"/></svg>
<svg class="r" style="left:835.90px;top:105.90px;" width="9" height="9" viewBox="0 0 9 9"><rect x="0.8" y="3.4" width="2" height="5" fill="#f0a24b"/><rect x="3.4" y="2.4" width="2" height="6" fill="#f0a24b"/><rect x="6" y="1.4" width="2" height="7" fill="#f0a24b"/><rect x="0.8" y="6" width="2" height="2.4" fill="#6aa0d8"/><rect x="3.4" y="5" width="2" height="3.4" fill="#6aa0d8"/><rect x="6" y="5.4" width="2" height="3" fill="#6aa0d8"/></svg>
<svg class="r" style="left:767.30px;top:117.20px;" width="9" height="9" viewBox="0 0 9 9"><rect x="0.8" y="1" width="1.6" height="7.4" fill="#bfbfbf"/><rect x="2.8" y="1" width="1.6" height="3.4" fill="#d9604c"/><rect x="4.6" y="3" width="1.6" height="4" fill="#5fae7c"/><rect x="6.6" y="1.4" width="1.6" height="7" fill="#bfbfbf"/></svg>
<div class="r" style="left:779.80px;top:116.30px;width:11.20px;height:10.80px;background:#1e1e1e;border:1.1px solid #e6c62a;box-sizing:border-box;"></div>
<svg class="r" style="left:780.90px;top:117.20px;" width="9" height="9" viewBox="0 0 9 9"><circle cx="2.6" cy="3" r="0.6" fill="#777"/><circle cx="5.6" cy="2.6" r="0.6" fill="#777"/><circle cx="4" cy="4.8" r="0.6" fill="#777"/><circle cx="6.4" cy="6" r="0.6" fill="#777"/><circle cx="2.8" cy="6.4" r="0.6" fill="#777"/></svg>
<svg class="r" style="left:794.90px;top:117.20px;" width="9" height="9" viewBox="0 0 9 9"><circle cx="4.5" cy="4.5" r="4" fill="#6aa0d8"/><path d="M4.5 4.5 L4.5 0.5 A4 4 0 0 0 0.8 6 Z" fill="#f2c7ad"/><path d="M4.5 4.5 L0.8 6 A4 4 0 0 0 2.4 7.9 Z" fill="#f0a24b"/></svg>
<svg class="r" style="left:808.40px;top:117.20px;" width="9" height="9" viewBox="0 0 9 9"><circle cx="4.5" cy="4.5" r="3" fill="none" stroke="#6aa0d8" stroke-width="1.9"/><path d="M4.5 1.5 A3 3 0 0 1 7.3 3.4" fill="none" stroke="#f0a24b" stroke-width="1.9"/></svg>
<svg class="r" style="left:822.00px;top:117.20px;" width="9" height="9" viewBox="0 0 9 9"><rect x="0.6" y="0.6" width="7.8" height="7.8" fill="#f2f2f2"/><path d="M4.6 0.6 V8.4 M0.6 5 H8.4 M6.4 5 V8.4" stroke="#9fb7d3" stroke-width="0.7"/></svg>
<svg class="r" style="left:835.90px;top:117.20px;" width="9" height="9" viewBox="0 0 9 9"><circle cx="4.5" cy="4.5" r="4" fill="#e6f1ee"/><ellipse cx="4.5" cy="4.5" rx="1.8" ry="4" fill="none" stroke="#9cc7c0" stroke-width="0.5"/><path d="M0.5 4.5 H8.5 M1.2 2.4 H7.8 M1.2 6.6 H7.8" stroke="#9cc7c0" stroke-width="0.5"/></svg>
<svg class="r" style="left:767.30px;top:129.10px;" width="9" height="9" viewBox="0 0 9 9"><path d="M0.6 1.6 L4 0.8 L8.2 2 L7.6 5 L5 5.6 L4.4 8 L1.8 6.6 Z" fill="#6aa0d8"/><path d="M4 0.8 L8.2 2 L7.6 5 L5 5.6 Z" fill="#f0a24b"/><path d="M1.4 4 L4.6 4.6 L4.4 8 L1.8 6.6 Z" fill="#f2f2f2"/></svg>
<svg class="r" style="left:780.90px;top:129.10px;" width="9" height="9" viewBox="0 0 9 9"><rect x="0.4" y="0.8" width="8.2" height="1.6" fill="#6aa0d8"/><rect x="1.4" y="2.9" width="6.2" height="1.6" fill="#f0a24b"/><rect x="2.4" y="5" width="4.2" height="1.6" fill="#f0a24b"/><rect x="3.4" y="7.1" width="2.2" height="1.4" fill="#6aa0d8"/></svg>
<svg class="r" style="left:794.90px;top:129.10px;" width="9" height="9" viewBox="0 0 9 9"><path d="M1 7.4 A3.5 3.5 0 0 1 8 7.4" fill="none" stroke="#e8c98a" stroke-width="1.7"/><path d="M5.6 4.2 A3.5 3.5 0 0 1 8 7.4" fill="none" stroke="#6bb58a" stroke-width="1.7"/></svg>
<svg class="r" style="left:808.40px;top:129.10px;" width="9" height="9" viewBox="0 0 9 9"><rect x="0.4" y="1.2" width="8.2" height="6.4" fill="#f2f2f2"/><rect x="1.4" y="3" width="2.6" height="1.6" fill="#6aa0d8"/><rect x="4.8" y="3" width="2.6" height="1.6" fill="#6aa0d8"/><rect x="1.4" y="5.4" width="6" height="0.7" fill="#aaa"/></svg>
<svg class="r" style="left:822.00px;top:129.10px;" width="9" height="9" viewBox="0 0 9 9"><rect x="0.8" y="0.4" width="7.4" height="8.2" fill="#f2f2f2"/><rect x="0.8" y="0.4" width="1.4" height="8.2" fill="#bbb"/><rect x="3" y="2" width="2.4" height="1.1" fill="#6aa0d8"/><rect x="3" y="5" width="2.4" height="1.1" fill="#6aa0d8"/></svg>
<svg class="r" style="left:835.90px;top:129.10px;" width="9" height="9" viewBox="0 0 9 9"><rect x="0.4" y="1.2" width="8.2" height="6.4" fill="#f2f2f2"/><rect x="1.6" y="3.2" width="1.4" height="1.2" fill="#d9604c"/><rect x="4" y="3.2" width="1.4" height="1.2" fill="#5fae7c"/></svg>
<svg class="r" style="left:767.30px;top:141.00px;" width="9" height="9" viewBox="0 0 9 9"><rect x="0.6" y="0.8" width="7.4" height="6.6" fill="#f2f2f2"/><rect x="0.6" y="0.8" width="7.4" height="1.4" fill="#6aa0d8"/><rect x="1.4" y="3.2" width="2.6" height="1.4" fill="#f0a24b"/><path d="M4.4 5.4 H8.6 L6.9 7.2 V8.6 H6.1 V7.2 Z" fill="#8a8a8a"/></svg>
<svg class="r" style="left:780.90px;top:141.00px;" width="9" height="9" viewBox="0 0 9 9"><rect x="0.6" y="0.6" width="7.8" height="7.8" fill="#f2f2f2"/><path d="M0.6 3.2 H8.4 M0.6 5.8 H8.4 M3.2 0.6 V8.4 M5.8 0.6 V8.4" stroke="#9a9a9a" stroke-width="0.6"/><rect x="0.6" y="0.6" width="7.8" height="1.5" fill="#d5d5d5"/></svg>
<svg class="r" style="left:794.90px;top:141.00px;" width="9" height="9" viewBox="0 0 9 9"><rect x="0.6" y="0.6" width="7.8" height="7.8" fill="#f2f2f2"/><path d="M0.6 3.2 H8.4 M0.6 5.8 H8.4 M3.2 0.6 V8.4 M5.8 0.6 V8.4" stroke="#9a9a9a" stroke-width="0.6"/><rect x="0.6" y="0.6" width="7.8" height="1.5" fill="#6aa0d8"/><rect x="0.6" y="0.6" width="1.8" height="7.8" fill="#6aa0d8" opacity="0.7"/></svg>
<svg class="r" style="left:808.40px;top:140.50px;" width="9" height="10" viewBox="0 0 9 10"><text x="4.5" y="8.6" font-size="10.5" font-weight="bold" fill="#7aa7d9" text-anchor="middle" font-family="Liberation Sans">R</text></svg>
<svg class="r" style="left:822.00px;top:141.00px;" width="9" height="9" viewBox="0 0 9 9"><circle cx="4.5" cy="4.5" r="4.1" fill="#3d8f6e"/><path d="M1 3 H8 M0.5 4.6 H8.5 M1 6.2 H8" stroke="#4e8fd0" stroke-width="0.9"/><ellipse cx="4.5" cy="4.5" rx="1.8" ry="4" fill="none" stroke="#9fd0a8" stroke-width="0.5"/></svg>
<div class="r" style="left:836.80px;top:145.00px;width:1.30px;height:1.30px;background:#e0e0e0;"></div>
<div class="r" style="left:839.70px;top:145.00px;width:1.30px;height:1.30px;background:#e0e0e0;"></div>
<div class="r" style="left:842.60px;top:145.00px;width:1.30px;height:1.30px;background:#e0e0e0;"></div>
<div class="r" style="left:764.00px;top:152.00px;width:87.00px;height:18.00px;background:#232323;"></div>
<div class="r" style="left:769.10px;top:168.70px;width:18.00px;height:1.40px;background:#c9a227;"></div>
<svg class="r" style="left:772.00px;top:155.40px;" width="12" height="10" viewBox="0 0 12 10"><rect x="0.9" y="2" width="10" height="7.2" fill="none" stroke="#d8d8d8" stroke-width="0.9"/><path d="M0.9 0.6 H10.9" stroke="#d8d8d8" stroke-width="0.9"/><path d="M0.9 5.6 H10.9 M4.3 3.6 V9 M7.6 3.6 V9" stroke="#d8d8d8" stroke-width="0.6" stroke-dasharray="1.4 0.8"/></svg>
<svg class="r" style="left:792.50px;top:155.00px;" width="11" height="11" viewBox="0 0 11 11"><rect x="1" y="0.8" width="7.6" height="2.6" rx="0.6" fill="none" stroke="#d8d8d8" stroke-width="0.9"/><path d="M8.6 2 H10 V4.8 H5.2 V6" fill="none" stroke="#d8d8d8" stroke-width="0.8"/><rect x="4.3" y="6" width="1.8" height="4.2" rx="0.6" fill="none" stroke="#d8d8d8" stroke-width="0.8"/></svg>
<svg class="r" style="left:811.50px;top:155.00px;" width="11" height="11" viewBox="0 0 11 11"><circle cx="4.6" cy="4.6" r="3.7" fill="none" stroke="#d8d8d8" stroke-width="0.9"/><path d="M7.3 7.3 L10.2 10.2" stroke="#d8d8d8" stroke-width="1.1"/><path d="M2.6 5.6 V4.4 M4 5.6 V3.4 M5.4 5.6 V4 M6.6 5.6 V2.8" stroke="#d8d8d8" stroke-width="0.6"/></svg>
<div class="r" style="left:848.30px;top:170.00px;width:2.70px;height:258.00px;background:#6a6a6a;"></div>
<span class="t" style="left:769.00px;top:174.60px;font-size:6.6px;line-height:6.6px;color:#8e8e8e;transform:scaleX(0.9171);">Details</span>
<svg class="r" style="left:766.00px;top:182.30px;" width="82" height="2" viewBox="0 0 82 2"><path d="M0.6 1 H81.2" stroke="#606060" stroke-width="0.8" stroke-dasharray="1.7 1.5" fill="none"/></svg>
<svg class="r" style="left:766.00px;top:198.00px;" width="82" height="2" viewBox="0 0 82 2"><path d="M0.6 1 H81.2" stroke="#606060" stroke-width="0.8" stroke-dasharray="1.7 1.5" fill="none"/></svg>
<div class="r" style="left:766.80px;top:185.70px;width:79.80px;height:11.10px;background:#2a2a2a;border-radius:1px;"></div>
<span class="t" style="left:769.50px;top:188.55px;font-size:6.6px;line-height:6.6px;color:#f2f2f2;-webkit-text-stroke:0.22px #f2f2f2;transform:scaleX(0.8804);">Customer Name</span>
<svg class="r" style="left:832.60px;top:190.05px;" width="4" height="3" viewBox="0 0 4 3"><path d="M0 0 L3 0 L1.5 1.8 Z" fill="#777"/></svg>
<svg class="r" style="left:839.80px;top:189.05px;" width="5" height="5" viewBox="0 0 5 5"><path d="M0.6 0.6 L4 4 M4 0.6 L0.6 4" stroke="#6e6e6e" stroke-width="0.6"/></svg>
<span class="t" style="left:769.00px;top:208.30px;font-size:6.6px;line-height:6.6px;color:#8e8e8e;transform:scaleX(0.8855);">Legend</span>
<div class="r" style="left:766.60px;top:218.60px;width:80.60px;height:11.60px;background:#474747;"></div>
<svg class="r" style="left:766.00px;top:217.80px;" width="82" height="2" viewBox="0 0 82 2"><path d="M0.6 1 H81.2" stroke="#606060" stroke-width="0.8" stroke-dasharray="1.7 1.5" fill="none"/></svg>
<svg class="r" style="left:766.00px;top:229.00px;" width="82" height="2" viewBox="0 0 82 2"><path d="M0.6 1 H81.2" stroke="#606060" stroke-width="0.8" stroke-dasharray="1.7 1.5" fill="none"/></svg>
<span class="t" style="left:770.60px;top:221.70px;font-size:6.6px;line-height:6.6px;color:#858585;transform:scaleX(0.8880);">Drag data fields here</span>
<span class="t" style="left:769.00px;top:237.30px;font-size:6.6px;line-height:6.6px;color:#8e8e8e;transform:scaleX(0.8833);">X Axis</span>
<svg class="r" style="left:766.00px;top:246.00px;" width="82" height="2" viewBox="0 0 82 2"><path d="M0.6 1 H81.2" stroke="#606060" stroke-width="0.8" stroke-dasharray="1.7 1.5" fill="none"/></svg>
<svg class="r" style="left:766.00px;top:261.20px;" width="82" height="2" viewBox="0 0 82 2"><path d="M0.6 1 H81.2" stroke="#606060" stroke-width="0.8" stroke-dasharray="1.7 1.5" fill="none"/></svg>
<div class="r" style="left:766.80px;top:249.40px;width:79.80px;height:10.60px;background:#2a2a2a;border-radius:1px;"></div>
<span class="t" style="left:769.50px;top:252.00px;font-size:6.6px;line-height:6.6px;color:#f2f2f2;-webkit-text-stroke:0.22px #f2f2f2;transform:scaleX(0.8177);">Sales</span>
<svg class="r" style="left:832.60px;top:253.50px;" width="4" height="3" viewBox="0 0 4 3"><path d="M0 0 L3 0 L1.5 1.8 Z" fill="#777"/></svg>
<svg class="r" style="left:839.80px;top:252.50px;" width="5" height="5" viewBox="0 0 5 5"><path d="M0.6 0.6 L4 4 M4 0.6 L0.6 4" stroke="#6e6e6e" stroke-width="0.6"/></svg>
<span class="t" style="left:769.00px;top:268.00px;font-size:6.6px;line-height:6.6px;color:#8e8e8e;transform:scaleX(0.8891);">Y Axis</span>
<svg class="r" style="left:766.00px;top:276.20px;" width="82" height="2" viewBox="0 0 82 2"><path d="M0.6 1 H81.2" stroke="#606060" stroke-width="0.8" stroke-dasharray="1.7 1.5" fill="none"/></svg>
<svg class="r" style="left:766.00px;top:291.20px;" width="82" height="2" viewBox="0 0 82 2"><path d="M0.6 1 H81.2" stroke="#606060" stroke-width="0.8" stroke-dasharray="1.7 1.5" fill="none"/></svg>
<div class="r" style="left:766.80px;top:279.60px;width:79.80px;height:10.40px;background:#2a2a2a;border-radius:1px;"></div>
<span class="t" style="left:769.50px;top:282.10px;font-size:6.6px;line-height:6.6px;color:#f2f2f2;-webkit-text-stroke:0.22px #f2f2f2;transform:scaleX(0.9154);">Profit</span>
<svg class="r" style="left:832.60px;top:283.60px;" width="4" height="3" viewBox="0 0 4 3"><path d="M0 0 L3 0 L1.5 1.8 Z" fill="#777"/></svg>
<svg class="r" style="left:839.80px;top:282.60px;" width="5" height="5" viewBox="0 0 5 5"><path d="M0.6 0.6 L4 4 M4 0.6 L0.6 4" stroke="#6e6e6e" stroke-width="0.6"/></svg>
<span class="t" style="left:769.00px;top:298.50px;font-size:6.6px;line-height:6.6px;color:#8e8e8e;transform:scaleX(0.8879);">Size</span>
<div class="r" style="left:766.60px;top:308.80px;width:80.60px;height:11.60px;background:#474747;"></div>
<svg class="r" style="left:766.00px;top:308.00px;" width="82" height="2" viewBox="0 0 82 2"><path d="M0.6 1 H81.2" stroke="#606060" stroke-width="0.8" stroke-dasharray="1.7 1.5" fill="none"/></svg>
<svg class="r" style="left:766.00px;top:319.20px;" width="82" height="2" viewBox="0 0 82 2"><path d="M0.6 1 H81.2" stroke="#606060" stroke-width="0.8" stroke-dasharray="1.7 1.5" fill="none"/></svg>
<span class="t" style="left:770.60px;top:311.90px;font-size:6.6px;line-height:6.6px;color:#858585;transform:scaleX(0.8880);">Drag data fields here</span>
<span class="t" style="left:769.00px;top:327.80px;font-size:6.6px;line-height:6.6px;color:#8e8e8e;transform:scaleX(0.9015);">Color saturation</span>
<div class="r" style="left:765.20px;top:337.20px;width:83.00px;height:13.00px;background:#404040;"></div>
<svg class="r" style="left:764.00px;top:336.00px;" width="86" height="16" viewBox="0 0 86 16"><rect x="1.4" y="1.3" width="82.6" height="13" fill="none" stroke="#b89c22" stroke-width="0.9" stroke-dasharray="1.8 1.5"/></svg>
<div class="r" style="left:771.60px;top:340.20px;width:69.60px;height:7.60px;background:#5a5a5a;"></div>
<span class="t" style="left:772.60px;top:341.80px;font-size:6.4px;line-height:6.4px;color:#777777;transform:scaleX(0.7209);">Drag</span>
<div class="r" style="left:784.20px;top:341.40px;width:5.60px;height:5.60px;background:#f2f2f2;"></div>
<svg class="r" style="left:791.80px;top:341.20px;" width="6" height="7" viewBox="0 0 6 7"><rect x="0.6" y="0.4" width="4" height="5.6" fill="#d0d0d0"/><path d="M1.3 1.9 H3.9 M1.3 3.2 H3.9 M1.3 4.5 H3.9" stroke="#555" stroke-width="0.5"/></svg>
<span class="t" style="left:800.50px;top:341.70px;font-size:6.6px;line-height:6.6px;color:#f4f4f4;-webkit-text-stroke:0.22px #f4f4f4;transform:scaleX(0.8739);">Profit measure</span>
<span class="t" style="left:769.00px;top:357.20px;font-size:6.6px;line-height:6.6px;color:#8e8e8e;transform:scaleX(0.8216);">Play Axis</span>
<div class="r" style="left:766.60px;top:367.40px;width:80.60px;height:11.60px;background:#474747;"></div>
<svg class="r" style="left:766.00px;top:366.60px;" width="82" height="2" viewBox="0 0 82 2"><path d="M0.6 1 H81.2" stroke="#606060" stroke-width="0.8" stroke-dasharray="1.7 1.5" fill="none"/></svg>
<svg class="r" style="left:766.00px;top:377.80px;" width="82" height="2" viewBox="0 0 82 2"><path d="M0.6 1 H81.2" stroke="#606060" stroke-width="0.8" stroke-dasharray="1.7 1.5" fill="none"/></svg>
<span class="t" style="left:770.60px;top:370.50px;font-size:6.6px;line-height:6.6px;color:#858585;transform:scaleX(0.8880);">Drag data fields here</span>
<span class="t" style="left:769.00px;top:386.80px;font-size:6.6px;line-height:6.6px;color:#8e8e8e;transform:scaleX(0.9161);">Tooltips</span>
<div class="r" style="left:766.60px;top:397.00px;width:80.60px;height:11.60px;background:#474747;"></div>
<svg class="r" style="left:766.00px;top:396.20px;" width="82" height="2" viewBox="0 0 82 2"><path d="M0.6 1 H81.2" stroke="#606060" stroke-width="0.8" stroke-dasharray="1.7 1.5" fill="none"/></svg>
<svg class="r" style="left:766.00px;top:407.40px;" width="82" height="2" viewBox="0 0 82 2"><path d="M0.6 1 H81.2" stroke="#606060" stroke-width="0.8" stroke-dasharray="1.7 1.5" fill="none"/></svg>
<span class="t" style="left:770.60px;top:400.10px;font-size:6.6px;line-height:6.6px;color:#858585;transform:scaleX(0.8880);">Drag data fields here</span>
<div class="r" style="left:764.00px;top:412.30px;width:84.30px;height:17.00px;background:#1f1f1f;"></div>
<span class="t" style="left:770.00px;top:417.83px;font-size:7.4px;line-height:7.4px;color:#f0f0f0;font-weight:bold;transform:scaleX(0.9048);">FILTERS</span>
<span class="t" style="left:769.00px;top:435.60px;font-size:6.6px;line-height:6.6px;color:#c9c9c9;transform:scaleX(0.8847);">Visual level filters</span>
<div class="r" style="left:767.20px;top:448.60px;width:79.60px;height:11.90px;background:#2e2e2e;border-radius:1.4px;"></div>
<span class="t" style="left:771.00px;top:451.25px;font-size:6.6px;line-height:6.6px;color:#f2f2f2;-webkit-text-stroke:0.22px #f2f2f2;transform:scaleX(0.9009);">Customer Name (All)</span>
<div class="r" style="left:767.20px;top:463.00px;width:79.60px;height:12.00px;background:#2e2e2e;border-radius:1.4px;"></div>
<span class="t" style="left:771.00px;top:465.70px;font-size:6.6px;line-height:6.6px;color:#f2f2f2;-webkit-text-stroke:0.22px #f2f2f2;transform:scaleX(0.9321);">Profit (All)</span>
<div class="r" style="left:767.20px;top:477.00px;width:79.60px;height:12.80px;background:#2e2e2e;border-radius:1.4px;"></div>
<span class="t" style="left:771.00px;top:480.10px;font-size:6.6px;line-height:6.6px;color:#f2f2f2;-webkit-text-stroke:0.22px #f2f2f2;transform:scaleX(0.8779);">Sales (All)</span>
<span class="t" style="left:857.70px;top:76.13px;font-size:7.4px;line-height:7.4px;color:#f0f0f0;font-weight:bold;transform:scaleX(0.8855);">FIELDS</span>
<svg class="r" style="left:928.40px;top:75.50px;" width="6" height="9" viewBox="0 0 6 9"><path d="M1.2 1 L4.4 4.2 L1.2 7.4" fill="none" stroke="#d0d0d0" stroke-width="0.9"/></svg>
<div class="r" style="left:852.00px;top:91.00px;width:88.00px;height:24.30px;background:#3c3c3c;"></div>
<div class="r" style="left:857.00px;top:95.20px;width:77.80px;height:14.50px;background:#1e1e1e;border:0.7px solid #161616;box-sizing:border-box;"></div>
<svg class="r" style="left:861.00px;top:98.20px;" width="8" height="8" viewBox="0 0 8 8"><circle cx="4.8" cy="3" r="2.2" fill="none" stroke="#bdbdbd" stroke-width="0.8"/><path d="M3.2 4.6 L0.8 7.2" stroke="#bdbdbd" stroke-width="0.9"/></svg>
<span class="t" style="left:873.80px;top:99.70px;font-size:6.8px;line-height:6.8px;color:#bdbdbd;transform:scaleX(0.8912);">Search</span>
<svg class="r" style="left:856.60px;top:123.00px;" width="4" height="4" viewBox="0 0 4 4"><path d="M3.2 0.4 V3.2 H0.4 Z" fill="#8a8a8a"/></svg>
<svg class="r" style="left:864.00px;top:121.50px;" width="7" height="7" viewBox="0 0 7 7"><rect x="0.3" y="0.5" width="6.2" height="5.8" fill="#e6e6e6"/><path d="M0.3 2.4 H6.5 M0.3 4.3 H6.5 M2.4 2.4 V6.3 M4.5 2.4 V6.3" stroke="#444" stroke-width="0.45"/></svg>
<span class="t" style="left:876.00px;top:121.90px;font-size:6.8px;line-height:6.8px;color:#e3bc1b;transform:scaleX(0.8662);">Orders</span>
<svg class="r" style="left:852.00px;top:91.00px;" width="88" height="340" viewBox="0 0 88 340"><rect x="2.70" y="41.75" width="81.4" height="9.5" fill="#5b5b5b"/><rect x="15.30" y="43.65" width="5.6" height="5.7" fill="#f6f6f6"/><rect x="2.70" y="52.53" width="81.4" height="9.5" fill="#5b5b5b"/><rect x="15.30" y="54.43" width="5.6" height="5.7" fill="#f6f6f6"/><rect x="2.70" y="63.31" width="81.4" height="9.5" fill="#5b5b5b"/><rect x="15.30" y="65.21" width="5.6" height="5.7" fill="#f6f6f6"/><rect x="2.70" y="74.09" width="81.4" height="9.5" fill="#5b5b5b"/><rect x="15.30" y="75.99" width="5.6" height="5.7" fill="#f6f6f6"/><rect x="2.70" y="84.87" width="81.4" height="9.5" fill="#5b5b5b"/><rect x="19.20" y="86.77" width="5.6" height="5.7" fill="#f6f6f6"/><rect x="2.70" y="95.65" width="81.4" height="9.5" fill="#5b5b5b"/><rect x="19.20" y="97.55" width="5.6" height="5.7" fill="#f6f6f6"/><rect x="2.70" y="106.43" width="81.4" height="9.5" fill="#5b5b5b"/><rect x="19.20" y="108.33" width="5.6" height="5.7" fill="#f6f6f6"/><rect x="2.70" y="117.21" width="81.4" height="9.5" fill="#5b5b5b"/><rect x="15.30" y="119.11" width="5.6" height="5.7" fill="#f6f6f6"/><rect x="2.70" y="127.99" width="81.4" height="9.5" fill="#5b5b5b"/><rect x="15.30" y="129.89" width="5.6" height="5.7" fill="#f2c811"/><path d="M16.40 132.74 l1.2 1.3 l2.2 -2.8" fill="none" stroke="#2a2a2a" stroke-width="0.8"/><rect x="2.70" y="138.77" width="81.4" height="9.5" fill="#5b5b5b"/><rect x="15.30" y="140.67" width="5.6" height="5.7" fill="#f6f6f6"/><rect x="2.70" y="149.55" width="81.4" height="9.5" fill="#5b5b5b"/><rect x="15.30" y="151.45" width="5.6" height="5.7" fill="#f6f6f6"/><rect x="2.70" y="160.33" width="81.4" height="9.5" fill="#5b5b5b"/><rect x="15.30" y="162.23" width="5.6" height="5.7" fill="#f6f6f6"/><rect x="2.70" y="171.11" width="81.4" height="9.5" fill="#5b5b5b"/><rect x="15.30" y="173.01" width="5.6" height="5.7" fill="#f6f6f6"/><rect x="2.70" y="181.89" width="81.4" height="9.5" fill="#5b5b5b"/><rect x="15.30" y="183.79" width="5.6" height="5.7" fill="#f6f6f6"/><rect x="2.70" y="192.67" width="81.4" height="9.5" fill="#5b5b5b"/><rect x="15.30" y="194.57" width="5.6" height="5.7" fill="#f6f6f6"/><rect x="2.70" y="203.45" width="81.4" height="9.5" fill="#5b5b5b"/><rect x="15.30" y="205.35" width="5.6" height="5.7" fill="#f2c811"/><path d="M16.40 208.20 l1.2 1.3 l2.2 -2.8" fill="none" stroke="#2a2a2a" stroke-width="0.8"/><rect x="2.70" y="214.23" width="81.4" height="9.5" fill="#5b5b5b"/><rect x="15.30" y="216.13" width="5.6" height="5.7" fill="#f6f6f6"/><rect x="2.70" y="225.01" width="81.4" height="9.5" fill="#5b5b5b"/><rect x="15.30" y="226.91" width="5.6" height="5.7" fill="#f6f6f6"/><rect x="2.70" y="235.79" width="81.4" height="9.5" fill="#5b5b5b"/><rect x="15.30" y="237.69" width="5.6" height="5.7" fill="#f6f6f6"/><rect x="2.70" y="246.57" width="81.4" height="9.5" fill="#5b5b5b"/><rect x="15.30" y="248.47" width="5.6" height="5.7" fill="#f6f6f6"/><rect x="2.70" y="257.35" width="81.4" height="9.5" fill="#5b5b5b"/><rect x="15.30" y="259.25" width="5.6" height="5.7" fill="#f6f6f6"/><rect x="2.70" y="268.13" width="81.4" height="9.5" fill="#5b5b5b"/><rect x="15.30" y="270.03" width="5.6" height="5.7" fill="#f2c811"/><path d="M16.40 272.88 l1.2 1.3 l2.2 -2.8" fill="none" stroke="#2a2a2a" stroke-width="0.8"/><rect x="2.70" y="278.91" width="81.4" height="9.5" fill="#5b5b5b"/><rect x="15.30" y="280.81" width="5.6" height="5.7" fill="#f6f6f6"/><rect x="2.70" y="289.69" width="81.4" height="9.5" fill="#5b5b5b"/><rect x="15.30" y="291.59" width="5.6" height="5.7" fill="#f6f6f6"/><rect x="2.70" y="300.47" width="81.4" height="9.5" fill="#5b5b5b"/><rect x="15.30" y="302.37" width="5.6" height="5.7" fill="#f6f6f6"/><rect x="2.70" y="311.25" width="81.4" height="9.5" fill="#5b5b5b"/><rect x="15.30" y="313.15" width="5.6" height="5.7" fill="#f6f6f6"/><rect x="2.70" y="322.03" width="81.4" height="9.5" fill="#5b5b5b"/><rect x="15.30" y="323.93" width="5.6" height="5.7" fill="#f6f6f6"/></svg>
<span class="t" style="left:882.80px;top:134.70px;font-size:6.8px;line-height:6.8px;color:#f4f4f4;-webkit-text-stroke:0.22px #f4f4f4;transform:scaleX(0.8880);">Category</span>
<span class="t" style="left:882.80px;top:145.48px;font-size:6.8px;line-height:6.8px;color:#f4f4f4;-webkit-text-stroke:0.22px #f4f4f4;transform:scaleX(0.8198);">City</span>
<span class="t" style="left:882.80px;top:156.26px;font-size:6.8px;line-height:6.8px;color:#f4f4f4;-webkit-text-stroke:0.22px #f4f4f4;transform:scaleX(0.8652);">Country</span>
<svg class="r" style="left:856.40px;top:167.84px;" width="4" height="4" viewBox="0 0 4 4"><path d="M3.2 0.4 V3.2 H0.4 Z" fill="#8a8a8a"/></svg>
<svg class="r" style="left:875.00px;top:166.84px;" width="6" height="6" viewBox="0 0 6 6"><rect x="0.4" y="0.4" width="2" height="1.6" fill="#e3bc1b"/><rect x="2.6" y="2.4" width="2" height="1.4" fill="#e3bc1b"/><rect x="2.6" y="4.4" width="2" height="1.4" fill="#e3bc1b"/><path d="M1.4 2 V5.1 H2.6 M1.4 3.1 H2.6" fill="none" stroke="#c9c9c9" stroke-width="0.4"/></svg>
<span class="t" style="left:882.80px;top:167.04px;font-size:6.8px;line-height:6.8px;color:#f4f4f4;-webkit-text-stroke:0.22px #f4f4f4;transform:scaleX(0.8585);">Country Hierar...</span>
<span class="t" style="left:886.60px;top:177.82px;font-size:6.8px;line-height:6.8px;color:#f4f4f4;-webkit-text-stroke:0.22px #f4f4f4;transform:scaleX(0.8652);">Country</span>
<span class="t" style="left:886.60px;top:188.60px;font-size:6.8px;line-height:6.8px;color:#f4f4f4;-webkit-text-stroke:0.22px #f4f4f4;transform:scaleX(0.8314);">State</span>
<span class="t" style="left:886.60px;top:199.38px;font-size:6.8px;line-height:6.8px;color:#f4f4f4;-webkit-text-stroke:0.22px #f4f4f4;transform:scaleX(0.8198);">City</span>
<span class="t" style="left:882.80px;top:210.16px;font-size:6.8px;line-height:6.8px;color:#f4f4f4;-webkit-text-stroke:0.22px #f4f4f4;transform:scaleX(0.8123);">Customer ID</span>
<span class="t" style="left:882.80px;top:220.94px;font-size:6.8px;line-height:6.8px;color:#f4f4f4;-webkit-text-stroke:0.22px #f4f4f4;transform:scaleX(0.8606);">Customer Name</span>
<span class="t" style="left:875.20px;top:231.92px;font-size:6.4px;line-height:6.4px;color:#8c8c8c;transform:scaleX(1.1122);">Σ</span>
<span class="t" style="left:882.80px;top:231.72px;font-size:6.8px;line-height:6.8px;color:#f4f4f4;-webkit-text-stroke:0.22px #f4f4f4;transform:scaleX(0.8845);">Discount</span>
<span class="t" style="left:882.80px;top:242.50px;font-size:6.8px;line-height:6.8px;color:#f4f4f4;-webkit-text-stroke:0.22px #f4f4f4;transform:scaleX(0.8385);">Order Date</span>
<span class="t" style="left:882.80px;top:253.28px;font-size:6.8px;line-height:6.8px;color:#f4f4f4;-webkit-text-stroke:0.22px #f4f4f4;transform:scaleX(0.8746);">Order ID</span>
<span class="t" style="left:875.20px;top:264.26px;font-size:6.4px;line-height:6.4px;color:#8c8c8c;transform:scaleX(1.1122);">Σ</span>
<span class="t" style="left:882.80px;top:264.06px;font-size:6.8px;line-height:6.8px;color:#f4f4f4;-webkit-text-stroke:0.22px #f4f4f4;transform:scaleX(0.8369);">Postal Code</span>
<span class="t" style="left:882.80px;top:274.84px;font-size:6.8px;line-height:6.8px;color:#f4f4f4;-webkit-text-stroke:0.22px #f4f4f4;transform:scaleX(0.8654);">Product ID</span>
<span class="t" style="left:882.80px;top:285.62px;font-size:6.8px;line-height:6.8px;color:#f4f4f4;-webkit-text-stroke:0.22px #f4f4f4;transform:scaleX(0.8698);">Product Name</span>
<span class="t" style="left:875.20px;top:296.60px;font-size:6.4px;line-height:6.4px;color:#8c8c8c;transform:scaleX(1.1122);">Σ</span>
<span class="t" style="left:882.80px;top:296.40px;font-size:6.8px;line-height:6.8px;color:#f4f4f4;-webkit-text-stroke:0.22px #f4f4f4;transform:scaleX(0.9199);">Profit</span>
<svg class="r" style="left:875.60px;top:306.98px;" width="5" height="6" viewBox="0 0 5 6"><rect x="0.5" y="0.4" width="3.6" height="5.2" fill="#bdbdbd"/><path d="M1.1 1.7 H3.5 M1.1 3 H3.5 M1.1 4.3 H3.5" stroke="#555" stroke-width="0.5"/></svg>
<span class="t" style="left:882.80px;top:307.18px;font-size:6.8px;line-height:6.8px;color:#f4f4f4;-webkit-text-stroke:0.22px #f4f4f4;transform:scaleX(0.8595);">Profit measure</span>
<svg class="r" style="left:875.60px;top:317.76px;" width="5" height="6" viewBox="0 0 5 6"><rect x="0.5" y="0.4" width="3.6" height="5.2" fill="#bdbdbd"/><path d="M1.1 1.7 H3.5 M1.1 3 H3.5 M1.1 4.3 H3.5" stroke="#555" stroke-width="0.5"/></svg>
<span class="t" style="left:882.80px;top:317.96px;font-size:6.8px;line-height:6.8px;color:#f4f4f4;-webkit-text-stroke:0.22px #f4f4f4;transform:scaleX(0.9317);">profit per</span>
<span class="t" style="left:875.20px;top:328.94px;font-size:6.4px;line-height:6.4px;color:#8c8c8c;transform:scaleX(1.1122);">Σ</span>
<span class="t" style="left:882.80px;top:328.74px;font-size:6.8px;line-height:6.8px;color:#f4f4f4;-webkit-text-stroke:0.22px #f4f4f4;transform:scaleX(0.9083);">Quantity</span>
<span class="t" style="left:882.80px;top:339.52px;font-size:6.8px;line-height:6.8px;color:#f4f4f4;-webkit-text-stroke:0.22px #f4f4f4;transform:scaleX(0.8539);">Region</span>
<span class="t" style="left:875.20px;top:350.50px;font-size:6.4px;line-height:6.4px;color:#8c8c8c;transform:scaleX(1.1122);">Σ</span>
<span class="t" style="left:882.80px;top:350.30px;font-size:6.8px;line-height:6.8px;color:#f4f4f4;-webkit-text-stroke:0.22px #f4f4f4;transform:scaleX(0.8344);">Row ID</span>
<span class="t" style="left:875.20px;top:361.28px;font-size:6.4px;line-height:6.4px;color:#8c8c8c;transform:scaleX(1.1122);">Σ</span>
<span class="t" style="left:882.80px;top:361.08px;font-size:6.8px;line-height:6.8px;color:#f4f4f4;-webkit-text-stroke:0.22px #f4f4f4;transform:scaleX(0.8113);">Sales</span>
<span class="t" style="left:882.80px;top:371.86px;font-size:6.8px;line-height:6.8px;color:#f4f4f4;-webkit-text-stroke:0.22px #f4f4f4;transform:scaleX(0.8451);">Segment</span>
<span class="t" style="left:882.80px;top:382.64px;font-size:6.8px;line-height:6.8px;color:#f4f4f4;-webkit-text-stroke:0.22px #f4f4f4;transform:scaleX(0.8372);">Ship Date</span>
<span class="t" style="left:882.80px;top:393.42px;font-size:6.8px;line-height:6.8px;color:#f4f4f4;-webkit-text-stroke:0.22px #f4f4f4;transform:scaleX(0.8490);">Ship Mode</span>
<span class="t" style="left:882.80px;top:404.20px;font-size:6.8px;line-height:6.8px;color:#f4f4f4;-webkit-text-stroke:0.22px #f4f4f4;transform:scaleX(0.8314);">State</span>
<span class="t" style="left:882.80px;top:414.98px;font-size:6.8px;line-height:6.8px;color:#f4f4f4;-webkit-text-stroke:0.22px #f4f4f4;transform:scaleX(0.8486);">Sub-Category</span>
<svg class="r" style="left:856.80px;top:428.30px;" width="4" height="5" viewBox="0 0 4 5"><path d="M0.6 0.4 L3 2.4 L0.6 4.4 Z" fill="#8a8a8a"/></svg>
<svg class="r" style="left:864.00px;top:427.60px;" width="7" height="7" viewBox="0 0 7 7"><rect x="0.3" y="0.5" width="6.2" height="5.8" fill="#e6e6e6"/><path d="M0.3 2.4 H6.5 M0.3 4.3 H6.5 M2.4 2.4 V6.3 M4.5 2.4 V6.3" stroke="#444" stroke-width="0.45"/></svg>
<span class="t" style="left:876.00px;top:428.10px;font-size:6.8px;line-height:6.8px;color:#f4f4f4;-webkit-text-stroke:0.22px #f4f4f4;transform:scaleX(0.9446);">People</span>
<svg class="r" style="left:856.80px;top:439.90px;" width="4" height="5" viewBox="0 0 4 5"><path d="M0.6 0.4 L3 2.4 L0.6 4.4 Z" fill="#8a8a8a"/></svg>
<svg class="r" style="left:864.00px;top:439.20px;" width="7" height="7" viewBox="0 0 7 7"><rect x="0.3" y="0.5" width="6.2" height="5.8" fill="#e6e6e6"/><path d="M0.3 2.4 H6.5 M0.3 4.3 H6.5 M2.4 2.4 V6.3 M4.5 2.4 V6.3" stroke="#444" stroke-width="0.45"/></svg>
<span class="t" style="left:876.00px;top:439.70px;font-size:6.8px;line-height:6.8px;color:#f4f4f4;-webkit-text-stroke:0.22px #f4f4f4;transform:scaleX(0.9653);">Returned</span>
<svg class="r" style="left:835.00px;top:305.00px;" width="32" height="46" viewBox="0 0 32 46"><path d="M26.4 6.6 H11 V28.5 L12.6 30.5 V40 H7" fill="none" stroke="#ff0000" stroke-width="2.7" stroke-linecap="round" stroke-linejoin="round"/><circle cx="6.4" cy="37.2" r="1.3" fill="#ff0000"/></svg>
<div class="r" style="left:0.00px;top:0.00px;width:941.00px;height:1.00px;background:#ff0000;"></div>
<div class="r" style="left:0.00px;top:0.00px;width:1.00px;height:501.00px;background:#ff0000;"></div>
<div class="r" style="left:940.00px;top:0.00px;width:1.00px;height:501.00px;background:#ff0000;"></div>
<div class="r" style="left:0.00px;top:499.00px;width:941.00px;height:1.00px;background:#a80c0c;"></div>
<div class="r" style="left:0.00px;top:500.00px;width:941.00px;height:1.00px;background:#ff0000;"></div>
</div></body></html>
